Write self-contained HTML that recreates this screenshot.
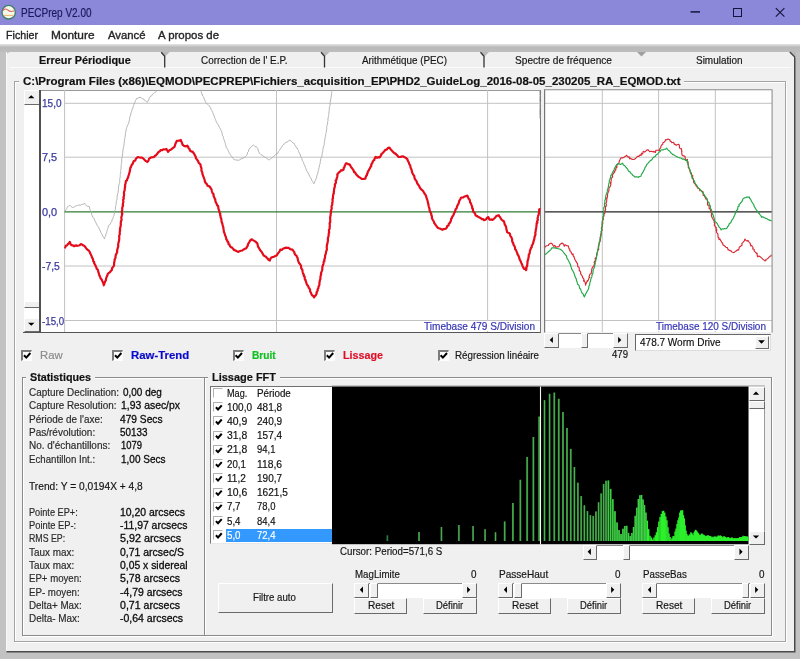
<!DOCTYPE html>
<html><head><meta charset="utf-8"><title>PECPrep V2.00</title>
<style>
html,body{margin:0;padding:0;}
body{width:800px;height:659px;position:relative;overflow:hidden;background:#c2c2c2;font-family:"Liberation Sans", sans-serif;}
.t{position:absolute;white-space:nowrap;transform-origin:0 50%;display:block;-webkit-text-stroke:0.18px currentColor;}
svg{position:absolute;left:0;top:0;}
</style></head><body><div id="w" style="position:absolute;left:0;top:0;width:800px;height:659px;will-change:transform;">
<div style="position:absolute;left:0px;top:0px;width:800px;height:24.6px;background:#8b87d9;"></div>
<svg width="20" height="25" viewBox="0 0 20 25"><ellipse cx="8.7" cy="12.2" rx="6.7" ry="6.8" fill="#f6f8ea" stroke="#3f8068" stroke-width="1.4"/><path d="M3.2 10.6 C4.5 8.6 6.2 8.6 7.6 9.8 S10.5 12.6 14.2 10.8" fill="none" stroke="#d86a60" stroke-width="1.1"/><path d="M4 15.4 H13.6" stroke="#ebb878" stroke-width="1.1"/></svg>
<span class="t" style="left:20.5px;top:7.10px;font-size:12px;line-height:12px;color:#1a1a5c;transform:scaleX(0.832);">PECPrep V2.00</span>
<svg width="800" height="25" viewBox="0 0 800 25"><g stroke="#14143c" stroke-width="1" fill="none"><path d="M690.5 11.9 H700" stroke-width="1.5"/><rect x="733.5" y="8.5" width="8" height="8"/><path d="M775.8 8.2 L784.4 16.6 M784.4 8.2 L775.8 16.6" stroke-width="1.1"/></g></svg>
<div style="position:absolute;left:0px;top:24.6px;width:800px;height:19.7px;background:#ffffff;"></div>
<span class="t" style="left:5.5px;top:29.85px;font-size:11px;line-height:11px;color:#262626;transform:scaleX(0.970);-webkit-text-stroke:0.35px #262626;">Fichier</span>
<span class="t" style="left:51px;top:29.85px;font-size:11px;line-height:11px;color:#262626;transform:scaleX(1.078);-webkit-text-stroke:0.35px #262626;">Monture</span>
<span class="t" style="left:107.5px;top:29.85px;font-size:11px;line-height:11px;color:#262626;transform:scaleX(1.028);-webkit-text-stroke:0.35px #262626;">Avancé</span>
<span class="t" style="left:157.5px;top:29.85px;font-size:11px;line-height:11px;color:#262626;transform:scaleX(1.039);-webkit-text-stroke:0.35px #262626;">A propos de</span>
<div style="position:absolute;left:0px;top:44.3px;width:800px;height:8px;background:linear-gradient(#e6e6e6,#bababa 40%,#bdbdbd);"></div>
<div style="position:absolute;left:6px;top:52px;width:788px;height:598.5px;background:#f0f0f0;border-radius:5px 3px 0 0;box-shadow:1px 1px 0 0.5px #4a4a4a;"></div>
<div style="position:absolute;left:6px;top:52px;width:1px;height:598px;background:#fafafa;"></div>
<div style="position:absolute;left:10px;top:67px;width:781px;height:1px;background:#fbfbfb;"></div>
<svg width="800" height="80"><path d="M789.5 51.5 L796 51.5 L796 58 Z" fill="#b9b9b9"/><path d="M789.8 52 L794.8 57" stroke="#444" stroke-width="1.4"/></svg>
<svg width="800" height="80"><path d="M161.2 52 L169.7 52 L165.2 56.5 Z" fill="#b8b8b8"/><path d="M161.2 52.3 L164.7 56.3 V67.5" stroke="#333" stroke-width="1.3" fill="none"/></svg>
<svg width="800" height="80"><path d="M321.0 52 L329.5 52 L325.0 56.5 Z" fill="#b8b8b8"/><path d="M321.0 52.3 L324.5 56.3 V67.5" stroke="#333" stroke-width="1.3" fill="none"/></svg>
<svg width="800" height="80"><path d="M480.5 52 L489 52 L484.5 56.5 Z" fill="#b8b8b8"/><path d="M480.5 52.3 L484 56.3 V67.5" stroke="#333" stroke-width="1.3" fill="none"/></svg>
<svg width="800" height="80"><path d="M637 52 L646 52 L641.5 56.5 Z" fill="#a0a0a0"/></svg>
<span class="t" style="left:38.75px;top:55.23px;font-size:10.5px;line-height:10.5px;color:#111;font-weight:bold;transform:scaleX(1.035);">Erreur Périodique</span>
<span class="t" style="left:201px;top:55.23px;font-size:10.5px;line-height:10.5px;color:#151515;transform:scaleX(0.943);">Correction de l&#x27; E.P.</span>
<span class="t" style="left:362px;top:55.23px;font-size:10.5px;line-height:10.5px;color:#151515;transform:scaleX(0.940);">Arithmétique (PEC)</span>
<span class="t" style="left:515px;top:55.23px;font-size:10.5px;line-height:10.5px;color:#151515;transform:scaleX(0.966);">Spectre de fréquence</span>
<span class="t" style="left:696px;top:55.23px;font-size:10.5px;line-height:10.5px;color:#151515;transform:scaleX(0.949);">Simulation</span>
<div style="position:absolute;left:13.5px;top:80.5px;width:772.5px;height:561.5px;border:1px solid #a4a4a4;box-shadow:1px 1px 0 #fff, inset 1px 1px 0 #fff;box-sizing:border-box;"></div>
<div style="position:absolute;left:19px;top:78.5px;width:665px;height:5px;background:#f0f0f0;"></div>
<span class="t" style="left:22.5px;top:76.02px;font-size:10.5px;line-height:10.5px;color:#111;font-weight:bold;transform:scaleX(1.096);">C:\Program Files (x86)\EQMOD\PECPREP\Fichiers_acquisition_EP\PHD2_GuideLog_2016-08-05_230205_RA_EQMOD.txt</span>
<div style="position:absolute;left:21.5px;top:376.5px;width:183px;height:259.3px;border:1px solid #8a8a8a;box-shadow:1px 1px 0 #fff, inset 1px 1px 0 #fff;box-sizing:border-box;"></div>
<div style="position:absolute;left:26px;top:374.5px;width:69px;height:5px;background:#f0f0f0;"></div>
<span class="t" style="left:30px;top:371.73px;font-size:10.5px;line-height:10.5px;color:#111;font-weight:bold;transform:scaleX(1.025);">Statistiques</span>
<div style="position:absolute;left:203.5px;top:376.5px;width:568.8px;height:259.3px;border:1px solid #8a8a8a;box-shadow:1px 1px 0 #fff, inset 1px 1px 0 #fff;box-sizing:border-box;"></div>
<div style="position:absolute;left:208px;top:374.5px;width:72px;height:5px;background:#f0f0f0;"></div>
<span class="t" style="left:212px;top:371.73px;font-size:10.5px;line-height:10.5px;color:#111;font-weight:bold;transform:scaleX(1.045);">Lissage FFT</span>
<div style="position:absolute;left:41px;top:90px;width:499.5px;height:242px;background:#fff;"></div>
<div style="position:absolute;left:23px;top:332px;width:518px;height:1.3px;background:#555;"></div>
<div style="position:absolute;left:539.8px;top:90px;width:1.3px;height:243px;background:#777;"></div>
<div style="position:absolute;left:41px;top:89.5px;width:499px;height:1px;background:#999;"></div>
<div style="position:absolute;left:24px;top:90px;width:15.5px;height:242px;background:#fff;border-right:1px solid #9a9a9a;box-sizing:border-box;"></div>
<div style="position:absolute;left:24px;top:90px;width:15.5px;height:14.5px;box-sizing:border-box;background:#f0f0f0;border-top:1px solid #fff;border-left:1px solid #fff;border-right:1.8px solid #6a6a6a;border-bottom:1.8px solid #6a6a6a;"></div>
<svg width="800" height="659"><path d="M28.05 98.35 L31.25 95.15 L34.45 98.35 Z" fill="#000"/></svg>
<div style="position:absolute;left:24px;top:317.5px;width:15.5px;height:14.5px;box-sizing:border-box;background:#f0f0f0;border-top:1px solid #fff;border-left:1px solid #fff;border-right:1.8px solid #6a6a6a;border-bottom:1.8px solid #6a6a6a;"></div>
<svg width="800" height="659"><path d="M28.05 322.65 L31.25 325.85 L34.45 322.65 Z" fill="#000"/></svg>
<div style="position:absolute;left:24px;top:300.5px;width:15.5px;height:7px;box-sizing:border-box;background:#f0f0f0;border-top:1px solid #fff;border-left:1px solid #fff;border-right:1.8px solid #6a6a6a;border-bottom:1.8px solid #6a6a6a;"></div>
<div style="position:absolute;left:39.4px;top:90px;width:1.4px;height:243px;background:#505050;"></div>
<svg width="800" height="659" viewBox="0 0 800 659">
<path d="M64.5 103.3 H540" stroke="#c2c2c2" stroke-width="1"/>
<path d="M64.5 157.2 H540" stroke="#c2c2c2" stroke-width="1"/>
<path d="M64.5 266 H540" stroke="#c2c2c2" stroke-width="1"/>
<path d="M64.5 320.5 H540" stroke="#c2c2c2" stroke-width="1"/>
<path d="M64.6 90 V332" stroke="#c2c2c2" stroke-width="1"/>
<path d="M276.5 90 V332" stroke="#c2c2c2" stroke-width="1"/>
<path d="M487.6 90 V332" stroke="#c2c2c2" stroke-width="1"/>
<path d="M64.5 211.9 H540" stroke="#2e7d32" stroke-width="1.3"/>
<polyline points="65.4,210.7 66.2,209.5 66.7,208.6 67.0,207.5 68.4,206.4 69.7,205.1 71.2,206.7 72.3,207.3 73.7,207.4 74.9,206.5 76.2,205.7 77.6,205.5 78.8,205.0 80.3,205.2 81.7,204.5 83.4,204.0 84.8,203.3 85.4,204.6 86.6,206.0 87.7,206.4 89.1,206.4 89.7,208.1 89.9,209.3 90.4,210.9 91.0,211.7 91.5,212.9 91.7,214.7 92.2,215.7 92.7,217.0 93.6,218.1 94.3,219.0 94.8,220.4 95.3,221.5 96.1,223.1 96.6,224.1 97.1,225.3 98.1,226.8 98.9,227.4 99.3,228.9 99.7,229.9 100.3,230.8 100.9,232.5 101.5,233.2 102.2,234.9 102.7,235.9 103.7,237.6 104.5,238.9 104.7,237.4 105.2,236.7 105.9,234.9 106.0,233.8 106.5,232.9 106.9,231.5 107.0,230.5 107.4,229.5 108.0,228.4 108.1,227.2 108.5,225.5 109.5,225.0 110.3,223.9 111.0,222.5 111.7,221.6 112.1,219.9 112.7,218.8 113.2,217.5 113.5,216.3 114.0,215.3 114.1,214.5 114.6,212.7 114.7,211.7 115.0,210.3 115.4,209.8 115.4,208.1 115.5,206.6 115.8,205.6 116.2,204.3 116.0,203.7 116.4,201.8 116.6,200.5 116.8,200.0 117.1,198.6 117.0,197.1 117.1,196.2 117.5,194.9 117.6,193.3 118.0,192.7 118.2,191.3 118.4,190.0 118.3,188.6 118.6,187.0 118.6,186.0 118.9,185.1 119.4,183.6 119.6,182.8 119.8,181.1 119.7,179.8 119.8,178.6 120.1,177.9 120.3,176.4 120.3,175.5 120.2,174.2 120.7,173.1 120.7,171.6 120.6,170.7 120.8,169.5 121.2,168.0 121.0,167.2 121.3,165.4 121.1,164.2 121.6,163.5 121.4,162.3 121.9,161.0 121.7,159.7 121.7,158.1 122.3,157.4 122.3,156.3 122.4,155.0 122.8,153.3 122.7,152.1 122.9,151.1 123.1,149.7 123.2,148.8 123.5,147.2 123.8,146.3 123.9,145.1 124.1,143.5 124.3,141.9 124.5,140.7 124.4,140.0 124.7,138.5 125.1,137.4 125.1,136.1 125.4,135.1 125.4,133.7 125.6,132.2 126.0,131.2 126.1,130.2 126.4,128.7 126.7,127.6 127.1,126.6 127.6,125.3 128.0,124.4 128.6,123.2 129.1,121.6 129.2,120.9 129.6,119.1 129.6,118.2 129.9,116.9 130.1,116.1 130.8,115.1 130.8,113.8 131.3,112.1 131.7,111.6 131.8,110.4 132.3,108.9 133.0,108.0 133.1,106.5 133.7,105.3 134.0,104.1 134.7,102.6 135.2,101.7 135.5,100.4 136.3,99.3 136.5,98.5 138.1,98.2 138.9,97.3 140.0,97.5 141.2,97.6 142.4,98.9 143.7,99.0 144.4,100.2 145.5,100.9 146.2,101.3 147.3,102.4 147.7,101.5 148.6,100.1 149.0,98.8 149.7,97.5 150.7,96.2 151.7,95.8 152.4,94.3 153.7,93.5 154.6,92.6 155.8,91.8 156.8,91.0 157.8,90.2" fill="none" stroke="#adadad" stroke-width="0.9" stroke-linejoin="round" stroke-linecap="round"/>
<polyline points="200.7,90.1 201.0,91.2 201.4,92.2 201.8,93.4 202.5,95.0 202.7,96.1 203.5,96.9 204.1,98.5 204.6,100.1 205.2,101.2 206.0,102.9 206.7,103.6 207.7,104.4 208.5,105.0 209.2,105.7 210.0,107.1 210.6,107.8 211.1,109.4 211.9,110.4 212.1,111.2 212.7,112.5 213.1,113.6 213.6,115.1 214.4,116.0 214.5,117.5 215.0,118.1 215.3,119.3 215.9,120.6 216.3,121.8 216.8,122.7 217.4,123.9 218.0,124.7 218.8,126.0 219.5,127.4 220.2,128.6 220.9,129.9 221.1,130.8 221.9,132.0 222.2,133.7 222.3,135.1 223.1,136.3 223.5,137.7 223.6,138.7 224.2,140.1 224.7,141.3 224.9,142.6 225.4,143.6 225.5,144.2 225.8,145.7 226.2,147.3 226.9,148.2 227.5,149.3 227.9,149.9 228.6,151.5 229.0,152.5 229.6,153.2 230.1,154.4 230.6,155.4 231.8,156.3 232.6,157.9 233.3,158.4 234.1,159.6 235.6,160.0 236.9,159.9 238.0,160.4 239.7,159.8 241.0,158.9 242.1,158.5 243.4,158.2 244.4,157.1 245.4,156.6 246.4,155.6 247.0,154.5 247.5,154.0 247.5,152.5 248.4,151.7 248.6,150.0 249.0,149.5 250.0,148.1 251.0,147.1 252.4,145.7 253.4,145.0 254.4,145.8 255.1,146.7 256.3,146.6 257.1,147.7 257.8,148.8 258.2,150.1 258.8,151.8 259.2,152.9 260.2,153.7 261.2,154.8 262.2,155.2 263.0,155.9 264.3,156.8 265.1,157.3 266.2,157.7 267.2,158.9 268.4,159.7 269.5,159.8 270.6,158.7 271.6,158.3 272.9,157.2 273.8,156.2 274.9,155.3 275.9,154.2 276.9,153.8 277.9,153.3 278.4,151.7 279.4,150.6 279.8,149.7 280.4,148.9 281.4,147.3 282.0,146.2 283.0,145.3 283.8,144.1 284.8,143.6 286.0,142.1 287.5,142.1 288.6,140.7 289.9,140.1 290.9,140.9 291.9,141.8 293.1,143.1 294.2,143.5 294.7,144.8 295.4,145.8 295.9,146.9 297.1,147.9 297.5,149.5 298.4,150.3 298.6,151.5 299.2,152.8 300.0,154.3 300.4,154.9 300.5,156.6 301.5,157.6 301.8,158.4 302.2,160.3 303.0,161.5 303.6,162.2 303.6,163.3 304.4,164.9 305.1,166.2 305.4,167.4 305.9,168.4 306.2,169.8 306.9,171.1 307.6,171.8 308.0,172.9 308.8,174.4 309.1,175.1 309.9,176.7 310.4,177.6 311.2,178.6 311.7,180.2 312.7,181.6 313.3,182.7 313.7,183.8 314.6,182.9 314.8,181.1 315.4,180.4 315.9,178.8 316.6,178.1 316.7,176.2 317.0,175.3 317.5,173.9 317.9,173.1 318.0,171.5 318.6,170.3 318.8,169.0 318.8,168.2 319.2,167.2 319.5,165.3 319.7,164.3 320.2,163.5 320.2,161.8 320.5,161.1 320.7,159.1 321.0,158.2 321.6,157.3 321.8,156.2 322.2,154.5 322.1,153.7 322.6,151.8 322.8,150.8 322.9,149.6 323.1,148.1 323.4,147.1 323.9,145.7 324.2,144.6 324.1,143.9 324.6,142.3 324.4,141.1 324.8,140.2 324.9,138.5 325.4,137.0 325.4,136.4 325.8,134.6 325.6,133.4 326.3,132.3 326.4,131.6 326.4,129.8 326.9,128.9 326.7,127.8 326.9,126.2 326.9,125.4 327.5,124.1 327.7,122.4 327.5,121.6 328.1,120.8 327.9,119.0 328.1,118.0 328.5,116.5 328.6,115.8 328.8,114.6 328.9,113.1 328.9,111.9 329.3,110.5 329.2,109.8 329.4,108.0 329.4,107.2 329.7,106.3 330.2,105.1 330.1,103.2 330.1,102.3 330.6,101.1 330.5,99.9 330.9,98.8 331.1,97.8 331.2,96.0 331.5,94.9 331.5,93.8 331.8,92.4 331.7,91.3 332.0,90.2" fill="none" stroke="#adadad" stroke-width="0.9" stroke-linejoin="round" stroke-linecap="round"/>
<polyline points="539.4,90.3 539.6,91.1 539.6,92.8 539.6,93.4 539.8,95.0 539.9,95.8 539.6,97.6 539.8,98.9 539.4,99.6 539.5,100.7 539.9,102.2 539.9,103.3 539.9,104.6 539.6,106.0 539.9,106.7 539.8,108.4 539.6,109.4 539.6,110.5 539.6,112.0 539.8,112.9 539.5,114.2 539.9,115.3 539.7,116.5 539.8,118.0" fill="none" stroke="#adadad" stroke-width="0.9" stroke-linejoin="round" stroke-linecap="round"/>
<polyline points="65.2,247.5 65.8,245.8 67.2,245.2 68.2,243.7 68.8,243.4 69.8,242.0 70.6,244.1 71.5,245.2 72.7,245.3 74.2,246.2 75.0,245.7 76.4,245.4 77.1,245.8 78.5,245.5 79.7,245.2 80.9,244.2 81.8,244.3 83.5,245.6 84.5,246.1 85.5,247.3 86.3,248.4 87.8,250.0 88.8,250.4 89.7,252.1 89.8,252.3 90.7,254.4 90.9,254.6 91.6,256.1 92.0,257.5 92.5,258.2 93.0,259.5 93.3,261.4 94.1,261.9 94.2,263.4 95.1,264.7 95.5,265.8 96.5,267.9 96.7,268.8 97.6,269.4 98.1,270.7 98.4,272.3 98.8,273.2 99.1,274.7 99.6,275.9 100.2,277.0 100.6,278.5 101.6,279.4 102.4,281.3 102.8,282.1 103.4,283.5 103.8,285.3 104.2,284.0 104.9,282.2 105.4,281.0 105.9,280.4 106.1,278.3 106.5,277.4 107.1,275.8 107.4,275.5 107.7,274.0 108.5,273.2 109.8,272.3 111.3,270.5 111.8,270.1 112.0,268.3 113.1,266.9 113.9,265.9 114.1,264.5 114.1,264.1 114.2,262.1 114.6,260.9 114.6,259.5 114.9,259.1 115.5,257.8 115.5,256.5 115.8,255.0 116.5,253.6 117.0,252.5 117.2,251.7 117.1,250.5 117.6,248.5 118.0,247.1 118.3,246.1 118.1,245.0 118.4,243.0 118.8,241.6 119.1,240.5 119.1,240.1 119.3,238.5 119.2,236.5 119.2,235.5 119.7,234.6 119.8,233.8 119.7,231.9 120.2,230.4 119.9,229.6 120.1,228.3 120.3,227.4 120.7,225.7 120.9,224.8 120.7,224.1 120.9,222.0 120.9,221.3 121.6,220.2 121.4,218.4 121.3,217.6 121.7,216.0 121.9,214.9 122.3,214.0 121.9,212.9 121.9,211.2 122.3,209.6 122.2,208.9 122.3,207.4 123.1,205.6 122.7,204.9 123.0,203.6 123.4,201.8 123.2,200.7 123.1,200.0 123.8,198.5 123.4,197.4 124.0,195.8 124.1,194.5 123.9,192.9 124.1,191.7 124.3,191.2 124.7,190.1 124.8,188.3 124.9,187.3 125.2,186.2 125.0,185.1 125.6,183.4 125.7,182.0 125.9,180.9 126.9,180.4 127.5,178.4 128.3,177.1 128.2,176.5 128.7,175.1 129.1,174.2 129.3,172.8 129.8,171.6 129.9,170.3 130.3,168.6 130.4,167.7 131.0,166.8 131.8,164.6 132.4,164.4 133.3,162.3 133.8,161.0 134.9,160.7 135.6,159.8 135.9,158.7 136.8,157.9 137.8,157.0 139.1,157.3 141.4,157.6 142.0,157.7 143.2,158.4 144.8,160.1 145.7,161.0 146.7,161.3 147.3,162.0 148.3,161.0 148.6,160.1 149.0,158.8 149.8,158.2 151.3,157.3 153.1,157.1 154.5,156.7 154.9,155.7 156.0,155.2 156.8,154.3 157.8,152.9 158.8,151.9 160.0,151.1 160.6,150.2 162.3,150.1 163.2,149.4 165.0,149.5 166.3,148.9 167.3,150.5 168.1,151.9 169.3,150.3 170.8,149.7 171.5,149.1 172.8,148.1 174.5,146.9 175.0,145.1 175.4,143.9 176.2,142.2 176.8,140.9 178.6,140.6 180.1,140.3 180.8,140.0 181.1,140.9 181.8,142.5 182.3,143.7 182.5,144.7 184.0,145.9 185.9,146.4 187.3,145.7 188.3,147.1 188.6,148.2 189.7,149.2 189.9,150.5 191.6,151.7 192.6,151.5 193.3,152.8 194.1,153.7 194.6,154.9 195.7,156.6 195.8,158.1 196.4,158.8 197.7,160.5 198.2,161.4 198.7,162.8 199.5,163.5 200.5,164.5 200.8,166.6 201.2,167.5 201.5,168.7 201.4,170.1 201.8,171.6 202.4,172.5 202.4,174.1 202.8,174.8 203.4,176.8 203.9,177.9 204.4,179.2 204.7,180.2 204.9,181.7 205.4,182.5 206.5,183.9 207.0,184.4 207.5,185.7 209.0,186.2 210.4,187.4 210.6,188.3 211.5,189.2 211.9,191.1 212.1,191.8 212.7,193.3 213.6,194.3 213.5,195.7 214.2,197.2 214.6,198.4 215.3,199.6 215.4,201.4 216.0,202.5 216.7,203.9 217.2,205.5 218.0,205.8 218.3,207.4 218.4,208.6 219.0,210.2 219.3,210.9 219.5,212.6 220.3,213.6 220.1,215.1 220.5,215.7 220.6,217.5 221.3,218.6 221.4,219.7 221.5,221.4 221.8,222.3 222.4,223.7 222.4,224.3 222.7,225.4 223.2,226.9 223.4,228.0 223.5,229.2 223.8,230.3 223.9,232.1 224.4,232.7 224.8,234.2 225.2,235.6 225.7,236.5 226.2,238.2 226.2,239.3 227.3,240.5 227.4,241.7 228.3,242.0 228.5,244.2 229.5,244.6 229.7,245.6 230.8,247.2 231.9,247.4 233.3,248.9 233.9,249.9 235.5,250.5 236.9,251.3 238.4,251.9 239.4,251.2 241.0,250.8 242.3,250.5 243.7,249.4 244.9,248.8 246.4,248.2 246.8,247.2 247.3,246.4 247.8,245.7 247.9,244.5 248.6,243.1 249.2,242.3 249.9,240.9 251.2,239.6 251.9,239.3 252.9,240.1 254.7,241.1 255.8,241.9 256.5,242.6 257.3,243.3 257.7,245.1 258.0,246.6 258.6,247.4 259.4,248.8 259.9,249.6 260.7,250.9 261.6,251.7 262.3,253.0 262.8,253.9 263.8,255.6 265.0,256.3 265.8,256.6 266.8,257.8 267.9,258.9 268.4,259.8 269.9,260.5 270.2,259.1 271.1,257.8 272.6,257.0 273.8,256.8 275.3,256.1 276.5,255.6 277.3,254.5 278.2,253.0 279.0,252.2 279.9,250.7 280.3,249.6 282.0,249.8 283.3,248.5 284.8,248.2 286.0,247.6 287.2,247.8 288.6,247.8 290.2,249.1 291.1,249.4 292.5,249.7 293.7,251.3 294.4,252.3 294.5,253.4 295.6,255.1 296.5,255.7 296.8,256.5 297.5,257.8 297.7,258.8 298.1,260.7 298.7,262.2 299.2,263.3 299.7,263.6 300.6,265.0 301.2,266.2 301.1,268.0 301.9,269.2 302.3,269.6 302.6,271.4 302.9,272.8 303.2,274.0 303.8,274.2 303.8,276.0 304.7,276.6 304.7,278.4 305.0,279.7 305.6,280.0 305.9,281.7 306.4,283.0 306.8,284.3 307.5,285.3 308.3,286.2 308.7,287.7 309.7,288.9 310.0,289.5 310.2,291.6 311.1,292.8 311.3,293.9 312.2,295.5 313.1,295.8 314.1,297.4 314.8,296.1 315.8,295.3 316.7,293.5 316.5,292.3 317.1,291.5 317.7,290.6 317.6,289.3 318.4,288.2 318.6,286.3 319.1,285.7 319.4,284.7 319.4,282.5 319.7,282.1 319.7,280.8 320.4,279.0 320.4,278.2 320.5,276.5 320.6,275.9 321.2,274.3 320.9,273.5 321.6,271.6 321.8,271.1 322.3,269.5 322.3,268.4 322.4,266.7 322.7,266.1 323.2,264.7 323.5,263.4 323.7,261.7 324.5,260.9 324.2,259.9 324.9,258.1 325.0,257.1 325.2,255.5 325.1,255.4 325.9,253.6 326.0,252.1 326.3,251.0 326.7,250.2 326.9,249.1 326.7,246.9 326.9,245.8 327.0,244.4 327.4,244.0 327.5,242.8 328.0,240.6 328.0,239.7 327.8,239.1 328.1,237.4 328.5,236.5 328.7,234.7 328.7,233.1 329.2,232.8 328.9,230.5 329.1,229.6 329.6,228.9 329.7,226.7 329.8,226.1 329.8,225.2 329.6,223.0 330.2,222.6 330.2,220.6 330.3,219.8 330.1,218.1 330.3,216.6 330.6,215.4 330.6,214.1 331.0,212.6 331.1,211.6 330.9,211.1 331.2,209.9 331.8,208.6 331.5,206.9 331.6,206.1 332.3,204.6 332.2,203.0 332.6,201.9 332.6,200.3 332.5,199.0 333.0,198.3 332.9,197.4 333.1,195.6 333.3,194.2 333.9,193.1 333.7,192.0 334.0,191.2 334.0,190.1 334.2,188.7 334.8,186.8 334.9,185.6 334.9,184.3 335.3,183.9 336.0,182.6 335.7,180.7 336.6,179.3 336.7,178.3 337.2,176.8 337.4,175.9 337.3,174.4 338.0,173.7 338.7,172.6 340.3,171.3 341.1,170.2 342.1,170.5 343.6,169.5 343.7,168.0 344.5,167.2 344.7,165.6 345.3,164.8 345.9,163.4 346.8,163.4 348.4,164.3 349.6,164.4 350.5,165.9 351.3,167.6 351.8,167.8 352.9,169.5 353.6,170.4 354.1,172.1 355.0,172.4 355.9,173.9 356.5,174.8 357.7,175.9 358.5,176.8 360.0,177.6 360.7,178.1 361.7,178.9 363.2,179.0 365.4,178.6 365.6,177.5 366.2,175.9 367.0,175.0 366.9,173.8 367.5,173.4 367.9,171.6 368.8,170.6 369.0,169.7 369.9,168.4 370.6,166.7 371.3,166.1 371.3,164.2 372.2,163.3 372.7,161.7 373.5,160.5 374.2,160.1 374.6,158.6 375.7,156.9 377.1,157.8 378.2,157.2 379.8,157.3 380.2,156.7 381.2,154.9 381.5,153.8 382.4,153.4 383.3,152.3 384.4,151.3 385.0,150.0 386.7,149.6 387.6,148.3 389.2,147.6 389.9,148.1 390.7,149.5 391.3,150.0 392.7,151.6 393.6,152.3 394.4,153.4 395.4,153.3 396.1,154.3 397.3,155.3 398.4,156.9 399.6,157.0 400.8,156.9 402.3,156.3 403.2,156.4 404.2,157.1 406.0,157.9 406.7,158.7 407.5,159.4 407.7,160.5 408.4,161.8 408.9,162.7 409.3,164.2 410.2,165.4 410.4,166.6 410.6,167.8 411.1,168.8 411.6,169.9 411.8,170.8 412.1,172.3 412.7,173.6 413.0,174.5 414.1,175.5 414.4,177.0 414.7,178.7 415.3,179.6 415.7,180.0 416.8,181.6 416.9,182.6 417.8,184.2 418.2,184.7 419.4,186.4 419.5,187.1 420.5,188.5 421.5,189.7 422.5,190.4 423.4,191.7 424.0,192.5 424.6,193.9 425.3,194.4 425.8,195.4 426.4,197.2 426.8,198.7 427.1,199.3 427.6,201.0 427.8,201.7 428.0,203.0 428.4,204.0 428.5,205.5 428.8,206.5 429.4,208.3 429.5,209.0 429.6,210.1 430.0,211.6 430.6,212.2 431.2,213.7 431.4,215.5 431.9,216.0 431.9,218.0 431.9,218.2 432.9,220.0 433.8,221.5 434.2,223.0 434.9,223.8 435.6,224.9 436.5,226.2 437.6,227.7 438.9,228.3 439.7,228.5 441.1,229.1 442.3,229.8 443.8,229.1 444.7,229.0 446.2,228.4 446.7,227.8 447.2,226.1 448.5,225.5 448.9,223.6 449.8,223.0 450.3,222.1 451.0,220.3 451.1,219.0 451.9,218.0 452.3,216.5 453.1,215.7 453.5,214.9 454.3,212.7 454.7,212.3 455.2,211.0 455.5,209.4 456.5,208.5 456.9,206.9 457.3,206.1 457.7,204.9 458.4,204.0 459.0,202.2 459.3,200.6 460.4,199.3 460.8,198.0 461.8,197.5 463.3,197.4 464.4,196.5 466.1,196.2 467.3,195.6 467.9,196.8 468.7,198.8 469.5,199.4 469.9,200.6 470.1,202.3 471.0,203.5 471.2,204.3 471.4,204.8 472.2,206.9 472.1,208.1 472.8,208.6 473.0,210.5 473.3,211.7 473.9,212.3 475.0,213.4 475.6,215.4 476.7,216.1 477.5,216.2 478.5,217.1 480.0,217.8 480.8,218.2 481.9,219.1 483.0,219.0 484.1,220.2 485.4,219.8 486.2,218.9 487.2,217.7 488.4,217.1 489.0,218.9 489.8,219.8 491.5,219.4 492.5,219.9 493.9,218.8 494.5,218.2 495.5,217.2 496.3,216.0 498.7,215.2 499.4,216.3 500.4,217.7 501.3,219.3 501.8,219.8 502.9,220.7 504.0,221.5 504.4,223.1 504.8,224.6 505.5,225.7 506.0,226.6 506.2,227.6 506.5,229.7 506.9,230.8 507.1,232.0 508.2,232.7 509.1,233.0 510.0,234.0 510.3,235.8 510.9,236.6 511.8,238.3 512.2,239.6 512.1,240.2 512.4,242.0 513.2,242.9 513.4,244.5 513.9,245.3 514.6,246.5 515.0,247.4 515.2,249.3 516.1,250.2 516.2,250.5 516.7,251.9 517.3,253.3 517.5,254.4 518.4,255.5 519.0,257.2 519.3,258.0 519.7,259.8 520.2,260.3 521.1,262.4 521.3,262.9 522.2,264.8 522.4,265.6 523.2,267.4 524.0,268.8 525.2,268.8 526.1,270.1 526.4,269.3 526.3,267.3 527.0,266.5 527.2,265.5 527.3,264.5 527.5,262.8 527.4,261.8 527.9,260.2 528.4,258.4 528.6,256.9 528.8,256.4 528.7,254.8 529.6,253.6 529.8,251.9 529.9,250.7 530.6,249.3 531.0,247.9 531.7,247.3 531.8,245.6 532.5,244.6 533.2,243.3 533.2,242.6 533.6,241.1 534.0,240.0 534.4,238.6 534.5,237.1 535.1,235.5 535.5,234.5 535.3,232.6 535.7,231.2 535.7,230.0 536.0,229.1 536.3,227.2 536.4,226.3 536.6,224.6 536.6,223.2 537.4,222.7 537.1,221.3 537.9,219.9 537.5,218.5 537.9,216.9 538.2,215.4 538.7,214.8 538.8,213.7 539.1,211.6 539.1,210.1 539.6,209.1" fill="none" stroke="#e40c1a" stroke-width="2.2" stroke-linejoin="round" stroke-linecap="round"/>
<rect x="545" y="90" width="227.5" height="242" fill="#fff"/>
<path d="M545 103.3 H772" stroke="#c2c2c2" stroke-width="1"/>
<path d="M545 157.2 H772" stroke="#c2c2c2" stroke-width="1"/>
<path d="M545 266 H772" stroke="#c2c2c2" stroke-width="1"/>
<path d="M545 320.5 H772" stroke="#c2c2c2" stroke-width="1"/>
<path d="M602.3 90 V332" stroke="#c2c2c2" stroke-width="1"/>
<path d="M658.6 90 V332" stroke="#c2c2c2" stroke-width="1"/>
<path d="M715.3 90 V332" stroke="#c2c2c2" stroke-width="1"/>
<path d="M545 211.9 H772" stroke="#222" stroke-width="1.2"/>
<polyline points="544.4,247.6 546.4,245.8 546.6,245.7 548.5,245.5 548.6,244.4 550.4,243.5 550.8,243.0 552.4,243.9 552.8,245.1 553.8,246.4 554.7,245.3 556.1,247.3 557.6,246.9 558.9,246.8 559.6,245.2 560.3,244.2 562.1,243.1 563.4,243.9 564.3,246.2 565.1,244.8 566.7,245.7 568.3,245.9 569.1,248.9 569.7,249.1 569.7,250.7 570.7,251.3 571.1,252.4 572.2,254.4 573.2,254.0 573.1,255.8 574.1,256.7 574.1,257.3 574.8,259.2 576.1,261.4 576.5,262.7 577.1,263.1 577.4,263.0 577.7,265.4 577.7,266.5 579.1,267.5 579.2,268.2 579.3,270.7 579.4,270.3 580.7,272.1 580.5,273.7 581.3,274.7 581.9,275.7 582.6,276.6 582.5,277.3 584.0,279.3 583.5,281.1 584.2,280.6 585.0,282.1 585.5,284.0 585.6,285.2 585.9,283.9 587.0,281.8 587.3,280.6 587.7,281.2 588.4,279.8 589.1,277.3 589.8,277.5 589.1,276.6 590.0,274.0 591.2,273.7 591.4,271.6 591.9,270.3 591.6,269.9 591.8,269.2 592.4,267.4 593.4,266.5 594.0,265.7 594.3,264.4 594.7,263.9 594.1,262.5 594.7,261.3 595.5,260.3 595.1,258.1 596.2,258.2 596.6,255.1 596.8,254.0 597.1,254.4 596.8,253.5 597.9,250.8 597.6,250.1 598.8,249.2 598.1,246.7 598.3,247.2 598.6,245.5 598.9,244.6 599.3,242.2 600.1,241.8 600.1,241.2 600.6,238.3 600.0,237.3 600.5,237.7 601.1,234.7 600.4,235.2 601.3,233.0 601.2,231.3 601.9,230.6 602.2,229.9 601.3,228.1 601.7,228.1 602.4,225.0 602.1,224.5 602.7,223.8 602.8,222.1 602.4,221.4 603.1,218.9 603.4,219.8 603.1,216.8 604.1,215.9 603.8,215.2 604.0,214.1 604.5,213.8 605.3,210.5 605.0,210.9 605.6,209.7 605.5,208.2 605.3,206.2 606.1,206.3 606.5,204.7 605.8,203.7 606.6,201.9 606.7,200.4 606.8,199.3 606.5,198.0 607.1,198.3 607.6,195.7 607.5,194.3 607.9,192.9 607.8,193.3 608.6,191.2 609.1,189.7 608.8,188.1 609.2,187.4 610.1,186.8 610.6,185.2 610.9,184.5 610.1,182.5 611.0,183.1 611.0,181.4 611.3,180.5 611.1,178.5 612.7,176.8 612.3,175.1 612.7,174.4 613.9,173.1 614.0,171.8 614.7,172.1 615.3,169.4 615.8,169.9 616.2,166.8 616.9,167.3 616.9,164.5 617.3,164.3 618.8,163.3 619.4,161.2 619.2,161.3 620.2,159.3 620.8,158.0 621.2,157.8 622.4,157.9 624.0,157.2 625.5,156.3 626.6,155.3 628.2,157.2 629.2,156.8 629.8,158.9 630.4,158.2 631.1,158.9 633.0,159.5 634.0,159.5 634.7,159.1 635.7,158.5 636.8,157.0 638.0,156.1 639.0,156.5 640.1,154.7 641.1,155.5 641.6,153.2 642.7,154.0 643.2,151.3 644.7,152.1 646.1,150.8 647.3,149.8 648.2,149.9 648.5,150.4 649.7,151.6 651.6,151.3 653.3,152.1 653.5,151.3 655.5,152.5 655.9,150.2 657.9,150.2 659.4,150.4 659.6,148.9 660.5,148.1 660.6,147.9 660.9,146.4 661.6,145.1 662.7,144.5 662.9,142.7 664.0,142.3 665.4,140.6 665.6,139.6 666.9,139.8 668.0,139.0 669.9,139.8 670.2,141.4 671.0,141.3 671.8,142.7 673.6,142.3 674.3,144.3 674.6,144.0 676.2,145.3 677.1,144.8 679.0,144.3 679.5,146.5 679.5,147.7 680.2,148.8 681.4,148.7 681.9,151.7 681.6,150.9 681.9,154.2 682.3,155.3 683.1,155.9 683.7,155.7 685.1,156.5 685.4,159.3 686.5,160.2 687.5,159.4 687.0,162.3 688.0,161.8 688.1,163.4 688.4,164.4 688.3,167.5 689.1,168.5 689.3,168.8 689.7,169.9 690.2,171.7 690.5,173.0 691.4,172.9 691.6,174.9 692.8,175.8 692.2,178.4 693.5,179.1 693.1,179.0 693.5,180.0 693.6,182.2 694.5,183.5 694.8,183.5 696.1,185.8 696.8,186.4 697.8,188.2 698.9,188.5 699.2,188.5 700.0,190.8 700.9,190.3 701.5,190.9 703.0,191.8 703.1,194.9 703.3,195.3 704.2,195.6 704.6,196.5 706.1,199.1 706.9,198.6 707.3,200.3 707.6,202.0 707.6,204.2 707.5,204.9 709.1,205.5 709.1,207.8 709.0,208.2 710.1,208.9 710.5,210.1 710.6,211.8 711.2,212.4 711.6,214.1 711.4,215.4 711.9,217.3 712.6,218.1 713.0,218.7 713.0,219.2 714.3,221.2 714.1,222.4 714.8,223.0 714.3,225.4 715.1,226.2 715.9,227.9 716.3,227.3 716.0,230.2 716.9,229.8 716.4,231.3 716.7,232.7 718.0,234.2 717.9,234.4 718.2,237.6 718.9,237.6 719.0,239.6 720.1,239.1 720.7,240.6 721.3,241.4 721.8,242.6 722.6,242.9 723.1,245.1 723.7,245.3 725.3,246.5 725.8,247.2 727.4,247.6 728.2,250.0 728.6,249.8 730.4,251.0 730.8,250.5 731.9,252.0 733.3,252.5 733.9,252.7 735.4,251.3 735.8,251.2 737.6,249.7 738.6,250.1 738.8,249.4 739.4,246.9 740.7,246.5 741.0,245.7 742.2,245.1 741.7,243.6 743.0,242.3 744.1,241.0 744.3,241.0 744.9,239.0 746.0,240.5 747.2,241.1 747.9,240.4 749.2,242.3 750.4,243.6 750.2,243.5 750.8,245.9 751.5,245.4 753.0,247.5 752.7,248.9 754.3,249.5 754.1,251.1 755.2,251.9 756.6,253.5 757.1,253.1 757.1,255.0 757.7,256.8 759.0,256.0 760.1,256.7 761.8,258.1 762.4,258.6 762.8,259.1 764.9,260.9 765.9,260.5 765.9,259.2 767.2,259.0 767.9,258.4 768.9,257.3 770.1,256.1 771.1,256.0 771.4,255.0" fill="none" stroke="#dc2834" stroke-width="1.15" stroke-linejoin="round" stroke-linecap="round"/>
<polyline points="544.7,254.8 545.9,254.0 546.8,253.1 547.5,252.7 548.4,251.7 549.6,250.7 550.2,250.2 551.1,249.3 551.7,247.9 553.4,247.7 554.9,247.9 556.1,248.2 557.6,248.7 558.8,248.8 560.1,249.2 560.7,249.6 561.9,250.4 562.8,251.3 563.2,252.0 564.5,253.7 565.1,254.3 565.9,255.4 566.6,255.8 566.7,257.5 567.2,258.8 567.9,259.4 568.5,260.7 569.0,261.7 569.7,263.0 570.2,264.0 570.7,266.0 570.9,266.2 571.4,268.0 571.8,269.0 572.2,270.1 573.0,271.2 573.5,272.0 574.0,273.2 574.5,275.2 575.0,275.9 575.0,276.8 575.8,278.1 576.3,278.9 576.5,280.8 577.0,281.6 577.2,282.4 577.7,284.3 578.5,284.7 579.1,285.6 579.5,287.6 579.9,288.7 580.6,288.9 581.0,290.4 581.5,291.8 582.0,292.9 582.6,293.3 583.3,294.4 583.9,296.2 584.5,297.0 584.7,295.9 585.3,294.9 585.9,293.6 586.6,292.3 587.4,290.9 587.6,290.6 588.3,289.3 588.9,287.8 588.8,286.3 589.6,285.1 589.7,284.4 589.7,283.2 590.1,282.1 590.6,280.8 590.7,279.6 591.1,278.2 591.4,277.8 591.9,276.7 591.9,275.5 592.5,274.2 592.9,273.0 593.0,271.9 593.2,270.2 593.5,269.2 594.1,267.9 594.6,266.6 594.7,265.5 594.9,264.9 595.3,263.0 595.2,262.3 595.9,260.5 595.9,260.0 596.3,258.4 596.5,257.4 596.8,255.7 597.1,254.9 597.0,253.4 597.2,252.8 597.7,251.1 597.7,249.8 597.9,248.7 598.2,248.3 598.8,246.9 598.8,245.4 599.2,244.6 599.4,243.1 599.3,241.9 600.0,240.9 599.8,239.6 600.2,237.9 600.8,237.2 600.8,235.4 601.0,235.0 601.2,233.6 601.3,232.5 601.3,230.9 601.6,230.0 601.8,228.3 602.0,227.4 602.1,225.7 602.3,225.2 602.0,224.0 602.1,222.2 602.4,221.0 602.6,220.5 602.9,219.1 602.8,217.9 603.2,216.6 603.5,215.5 603.3,213.6 603.6,213.1 603.6,211.7 604.0,210.7 603.7,209.2 603.8,207.6 604.4,206.7 604.5,205.5 604.5,204.0 604.6,203.5 604.9,201.7 604.8,200.5 605.4,199.4 605.6,198.6 605.6,197.3 605.8,196.2 606.2,194.4 606.9,193.3 606.8,192.6 607.3,191.4 607.4,189.8 608.0,188.6 608.3,187.1 608.5,185.8 608.6,184.5 608.7,184.2 609.1,182.9 609.3,181.2 609.4,180.2 610.2,178.9 610.2,178.1 610.7,176.7 610.8,175.5 611.6,174.8 612.1,173.4 612.8,172.0 613.2,171.2 614.0,170.0 614.2,169.3 614.6,168.1 615.5,166.7 615.9,165.8 616.7,164.7 617.9,163.9 618.8,163.8 620.4,164.4 621.2,163.9 622.6,163.2 623.4,164.9 624.4,165.4 625.3,166.4 626.1,167.5 627.2,168.7 627.9,169.7 628.5,171.0 629.6,171.7 630.2,172.1 631.2,173.7 632.2,174.2 632.7,175.4 634.0,176.0 634.7,177.0 635.7,176.7 636.9,176.9 638.5,177.3 639.3,176.5 641.0,176.2 641.1,175.3 641.6,174.1 642.3,173.1 643.2,171.9 643.2,171.5 643.9,170.3 644.6,169.1 645.0,167.4 645.8,166.7 646.2,165.8 646.9,164.3 647.5,164.0 648.5,162.5 649.5,161.6 650.5,160.4 651.4,160.1 652.0,159.5 652.9,157.9 653.6,157.3 655.0,156.6 655.6,155.9 656.3,154.5 657.5,154.3 658.3,153.2 659.3,152.0 660.2,151.5 660.7,150.3 662.2,149.8 663.0,150.0 664.4,149.2 665.7,149.2 666.6,148.2 667.4,149.2 668.5,150.5 669.5,151.0 670.2,151.9 671.0,153.0 672.2,153.9 672.7,154.6 674.2,155.0 675.4,155.9 676.5,156.4 677.6,157.1 678.4,157.5 679.9,157.9 680.8,158.0 682.2,159.1 683.2,158.9 684.3,159.2 685.8,160.5 687.1,160.3 687.4,161.1 687.8,162.5 687.7,164.0 688.1,164.8 688.5,166.1 689.1,167.6 689.2,168.8 689.6,169.3 690.3,170.6 690.4,172.0 690.7,173.3 691.1,174.5 691.8,175.4 691.7,176.8 692.3,177.6 693.1,178.3 693.7,180.1 694.3,180.9 694.8,182.2 695.2,183.6 696.2,184.7 696.7,185.3 697.3,186.2 697.8,187.1 698.7,188.5 699.7,189.1 700.3,189.7 701.2,190.7 702.0,192.0 703.0,192.5 703.5,193.9 704.2,194.6 705.0,196.2 706.0,197.3 706.6,198.6 707.1,199.6 707.4,200.2 708.0,201.9 709.1,202.8 709.3,203.8 709.6,205.2 710.5,206.1 710.3,207.2 710.9,209.1 711.6,209.9 711.6,210.8 712.0,212.6 712.6,214.1 713.2,215.1 713.4,216.3 713.6,216.8 714.2,218.4 714.4,219.3 714.7,221.2 715.9,222.3 716.8,222.9 717.4,224.0 718.2,225.5 718.5,225.8 719.3,227.5 720.2,228.0 721.2,229.9 722.2,228.8 723.6,229.0 724.3,228.5 725.9,228.7 727.0,228.1 727.5,226.7 728.6,225.8 728.8,225.0 729.4,223.6 730.3,223.0 731.1,222.1 731.6,220.4 732.5,219.4 733.0,218.7 733.6,217.8 733.9,216.6 734.7,215.2 734.9,214.5 735.7,212.5 736.0,212.2 736.5,210.5 737.4,209.7 737.8,208.5 738.0,206.6 739.1,206.2 739.0,204.2 739.9,204.1 740.6,202.8 741.8,201.8 742.5,200.3 742.8,199.1 743.9,198.1 744.8,197.7 745.5,197.6 746.7,197.1 747.9,197.1 749.5,197.0 749.5,198.1 750.4,199.1 750.9,200.0 751.5,201.3 751.8,201.7 752.6,203.0 753.1,203.8 753.8,204.9 754.4,206.8 754.7,207.2 755.4,208.4 756.0,209.3 757.1,210.8 757.5,211.3 758.5,213.1 759.3,213.4 759.8,214.6 760.8,215.4 761.5,217.3 762.8,216.7 763.5,217.2 765.1,218.1 766.2,218.4 767.3,218.9 768.8,219.9 770.2,220.4 771.4,220.8" fill="none" stroke="#1fa845" stroke-width="1.15" stroke-linejoin="round" stroke-linecap="round"/>
<path d="M544.6 89.5 V332.5" stroke="#777" stroke-width="1.2" fill="none"/><path d="M544 89.8 H772.5" stroke="#8c8c8c" stroke-width="1.1" fill="none"/>
<path d="M772.1 90 V332.5" stroke="#8e8e8e" stroke-width="1.1" fill="none"/>
</svg>
<span class="t" style="left:41.8px;top:98.22px;font-size:10.5px;line-height:10.5px;color:#3a3a9e;transform:scaleX(0.959);-webkit-text-stroke:0.25px #3a3a9e;">15,0</span>
<span class="t" style="left:41.8px;top:152.22px;font-size:10.5px;line-height:10.5px;color:#3a3a9e;transform:scaleX(1.041);-webkit-text-stroke:0.25px #3a3a9e;">7,5</span>
<span class="t" style="left:41.8px;top:206.72px;font-size:10.5px;line-height:10.5px;color:#3a3a9e;transform:scaleX(1.041);-webkit-text-stroke:0.25px #3a3a9e;">0,0</span>
<span class="t" style="left:41.8px;top:261.23px;font-size:10.5px;line-height:10.5px;color:#3a3a9e;transform:scaleX(0.984);-webkit-text-stroke:0.25px #3a3a9e;">-7,5</span>
<span class="t" style="left:41.8px;top:316.23px;font-size:10.5px;line-height:10.5px;color:#3a3a9e;transform:scaleX(0.928);-webkit-text-stroke:0.25px #3a3a9e;">-15,0</span>
<span class="t" style="left:424px;top:320.73px;font-size:10.5px;line-height:10.5px;color:#3434b4;transform:scaleX(0.959);background:#fff;">Timebase 479 S/Division</span>
<span class="t" style="left:656px;top:320.73px;font-size:10.5px;line-height:10.5px;color:#3434b4;transform:scaleX(0.950);background:#fff;">Timebase 120 S/Division</span>
<div style="position:absolute;left:544.2px;top:332.8px;width:83.6px;height:15.2px;background:#fff;border-top:1px solid #8a8a8a;box-sizing:border-box;"></div>
<div style="position:absolute;left:544.2px;top:332.8px;width:15.2px;height:15.2px;box-sizing:border-box;background:#f0f0f0;border-top:1px solid #fff;border-left:1px solid #fff;border-right:1.8px solid #6a6a6a;border-bottom:1.8px solid #6a6a6a;"></div>
<svg width="800" height="659"><path d="M552.9000000000001 336.70000000000005 L549.7 339.90000000000003 L552.9000000000001 343.1 Z" fill="#000"/></svg>
<div style="position:absolute;left:612.6px;top:332.8px;width:15.2px;height:15.2px;box-sizing:border-box;background:#f0f0f0;border-top:1px solid #fff;border-left:1px solid #fff;border-right:1.8px solid #6a6a6a;border-bottom:1.8px solid #6a6a6a;"></div>
<svg width="800" height="659"><path d="M618.1 336.70000000000005 L621.3000000000001 339.90000000000003 L618.1 343.1 Z" fill="#000"/></svg>
<div style="position:absolute;left:581px;top:332.8px;width:6.5px;height:15.2px;box-sizing:border-box;background:#f0f0f0;border-top:1px solid #fff;border-left:1px solid #fff;border-right:1.8px solid #6a6a6a;border-bottom:1.8px solid #6a6a6a;"></div>
<span class="t" style="left:611.5px;top:349.03px;font-size:10.5px;line-height:10.5px;color:#151515;transform:scaleX(0.913);">479</span>
<div style="position:absolute;left:635px;top:333.5px;width:135.5px;height:17.5px;box-sizing:border-box;background:#fff;border-top:1.5px solid #666;border-left:1.5px solid #666;border-right:1px solid #ddd;border-bottom:1px solid #ddd;"></div>
<span class="t" style="left:639.5px;top:337.03px;font-size:10.5px;line-height:10.5px;color:#111;transform:scaleX(0.954);">478.7 Worm Drive</span>
<div style="position:absolute;left:755px;top:335.5px;width:13.5px;height:13.5px;box-sizing:border-box;background:#f0f0f0;border-top:1px solid #fff;border-left:1px solid #fff;border-right:1.8px solid #6a6a6a;border-bottom:1.8px solid #6a6a6a;"></div>
<svg width="800" height="659"><path d="M758.1 340.3 L761.5 343.7 L764.9 340.3 Z" fill="#000"/></svg>
<div style="position:absolute;left:21px;top:349.6px;width:11px;height:11px;box-sizing:border-box;background:#fcfcfc;border-top:2px solid #7c7c7c;border-left:2px solid #7c7c7c;border-right:1px solid #fdfdfd;border-bottom:1px solid #fdfdfd;"></div>
<svg width="800" height="659"><path d="M24.00 355.20 L26.30 357.60 L30.40 353.00" stroke="#000" stroke-width="2" fill="none"/></svg>
<span class="t" style="left:40px;top:349.75px;font-size:11px;line-height:11px;color:#8a8a8a;transform:scaleX(1.027);">Raw</span>
<div style="position:absolute;left:112px;top:349.6px;width:11px;height:11px;box-sizing:border-box;background:#fcfcfc;border-top:2px solid #7c7c7c;border-left:2px solid #7c7c7c;border-right:1px solid #fdfdfd;border-bottom:1px solid #fdfdfd;"></div>
<svg width="800" height="659"><path d="M115.00 355.20 L117.30 357.60 L121.40 353.00" stroke="#000" stroke-width="2" fill="none"/></svg>
<span class="t" style="left:130.8px;top:349.75px;font-size:11px;line-height:11px;color:#0a0acc;font-weight:bold;transform:scaleX(1.035);">Raw-Trend</span>
<div style="position:absolute;left:232.6px;top:349.6px;width:11px;height:11px;box-sizing:border-box;background:#fcfcfc;border-top:2px solid #7c7c7c;border-left:2px solid #7c7c7c;border-right:1px solid #fdfdfd;border-bottom:1px solid #fdfdfd;"></div>
<svg width="800" height="659"><path d="M235.60 355.20 L237.90 357.60 L242.00 353.00" stroke="#000" stroke-width="2" fill="none"/></svg>
<span class="t" style="left:251.8px;top:349.75px;font-size:11px;line-height:11px;color:#10c020;font-weight:bold;transform:scaleX(0.924);">Bruit</span>
<div style="position:absolute;left:323.8px;top:349.6px;width:11px;height:11px;box-sizing:border-box;background:#fcfcfc;border-top:2px solid #7c7c7c;border-left:2px solid #7c7c7c;border-right:1px solid #fdfdfd;border-bottom:1px solid #fdfdfd;"></div>
<svg width="800" height="659"><path d="M326.80 355.20 L329.10 357.60 L333.20 353.00" stroke="#000" stroke-width="2" fill="none"/></svg>
<span class="t" style="left:342.5px;top:349.75px;font-size:11px;line-height:11px;color:#e0102a;font-weight:bold;transform:scaleX(0.977);">Lissage</span>
<div style="position:absolute;left:437.6px;top:349.6px;width:11px;height:11px;box-sizing:border-box;background:#fcfcfc;border-top:2px solid #7c7c7c;border-left:2px solid #7c7c7c;border-right:1px solid #fdfdfd;border-bottom:1px solid #fdfdfd;"></div>
<svg width="800" height="659"><path d="M440.60 355.20 L442.90 357.60 L447.00 353.00" stroke="#000" stroke-width="2" fill="none"/></svg>
<span class="t" style="left:455px;top:349.75px;font-size:11px;line-height:11px;color:#151515;transform:scaleX(0.892);">Régression linéaire</span>
<span class="t" style="left:28.8px;top:387.03px;font-size:10.5px;line-height:10.5px;color:#2a2a2a;transform:scaleX(0.946);">Capture Declination:</span>
<span class="t" style="left:123px;top:387.03px;font-size:10.5px;line-height:10.5px;color:#0c0c0c;transform:scaleX(0.948);-webkit-text-stroke:0.3px #0c0c0c;">0,00 deg</span>
<span class="t" style="left:28.8px;top:400.36px;font-size:10.5px;line-height:10.5px;color:#2a2a2a;transform:scaleX(0.942);">Capture Resolution:</span>
<span class="t" style="left:121px;top:400.36px;font-size:10.5px;line-height:10.5px;color:#0c0c0c;transform:scaleX(0.991);-webkit-text-stroke:0.3px #0c0c0c;">1,93 asec/px</span>
<span class="t" style="left:28.8px;top:413.69px;font-size:10.5px;line-height:10.5px;color:#2a2a2a;transform:scaleX(0.946);">Période de l&#x27;axe:</span>
<span class="t" style="left:120px;top:413.69px;font-size:10.5px;line-height:10.5px;color:#0c0c0c;transform:scaleX(0.971);-webkit-text-stroke:0.3px #0c0c0c;">479 Secs</span>
<span class="t" style="left:28.8px;top:427.01px;font-size:10.5px;line-height:10.5px;color:#2a2a2a;transform:scaleX(0.953);">Pas/révolution:</span>
<span class="t" style="left:120px;top:427.01px;font-size:10.5px;line-height:10.5px;color:#0c0c0c;transform:scaleX(0.942);-webkit-text-stroke:0.3px #0c0c0c;">50133</span>
<span class="t" style="left:28.8px;top:440.34px;font-size:10.5px;line-height:10.5px;color:#2a2a2a;transform:scaleX(0.950);">No. d&#x27;échantillons:</span>
<span class="t" style="left:120.75px;top:440.34px;font-size:10.5px;line-height:10.5px;color:#0c0c0c;transform:scaleX(0.899);-webkit-text-stroke:0.3px #0c0c0c;">1079</span>
<span class="t" style="left:28.8px;top:453.67px;font-size:10.5px;line-height:10.5px;color:#2a2a2a;transform:scaleX(0.922);">Echantillon Int.:</span>
<span class="t" style="left:120.5px;top:453.67px;font-size:10.5px;line-height:10.5px;color:#0c0c0c;transform:scaleX(0.953);-webkit-text-stroke:0.3px #0c0c0c;">1,00 Secs</span>
<span class="t" style="left:28.8px;top:480.53px;font-size:10.5px;line-height:10.5px;color:#151515;transform:scaleX(0.971);">Trend: Y = 0,0194X + 4,8</span>
<span class="t" style="left:28.8px;top:506.73px;font-size:10.5px;line-height:10.5px;color:#2a2a2a;transform:scaleX(0.874);">Pointe EP+:</span>
<span class="t" style="left:120px;top:506.73px;font-size:10.5px;line-height:10.5px;color:#0c0c0c;transform:scaleX(0.994);-webkit-text-stroke:0.3px #0c0c0c;">10,20 arcsecs</span>
<span class="t" style="left:28.8px;top:520.02px;font-size:10.5px;line-height:10.5px;color:#2a2a2a;transform:scaleX(0.889);">Pointe EP-:</span>
<span class="t" style="left:120px;top:520.02px;font-size:10.5px;line-height:10.5px;color:#0c0c0c;transform:scaleX(0.991);-webkit-text-stroke:0.3px #0c0c0c;">-11,97 arcsecs</span>
<span class="t" style="left:28.8px;top:533.32px;font-size:10.5px;line-height:10.5px;color:#2a2a2a;transform:scaleX(0.838);">RMS EP:</span>
<span class="t" style="left:120px;top:533.32px;font-size:10.5px;line-height:10.5px;color:#0c0c0c;transform:scaleX(1.025);-webkit-text-stroke:0.3px #0c0c0c;">5,92 arcsecs</span>
<span class="t" style="left:28.8px;top:546.62px;font-size:10.5px;line-height:10.5px;color:#2a2a2a;transform:scaleX(0.945);">Taux max:</span>
<span class="t" style="left:120px;top:546.62px;font-size:10.5px;line-height:10.5px;color:#0c0c0c;transform:scaleX(0.997);-webkit-text-stroke:0.3px #0c0c0c;">0,71 arcsec/S</span>
<span class="t" style="left:28.8px;top:559.92px;font-size:10.5px;line-height:10.5px;color:#2a2a2a;transform:scaleX(0.945);">Taux max:</span>
<span class="t" style="left:120px;top:559.92px;font-size:10.5px;line-height:10.5px;color:#0c0c0c;transform:scaleX(0.988);-webkit-text-stroke:0.3px #0c0c0c;">0,05 x sidereal</span>
<span class="t" style="left:28.8px;top:573.22px;font-size:10.5px;line-height:10.5px;color:#2a2a2a;transform:scaleX(0.917);">EP+ moyen:</span>
<span class="t" style="left:120px;top:573.22px;font-size:10.5px;line-height:10.5px;color:#0c0c0c;transform:scaleX(1.008);-webkit-text-stroke:0.3px #0c0c0c;">5,78 arcsecs</span>
<span class="t" style="left:28.8px;top:586.52px;font-size:10.5px;line-height:10.5px;color:#2a2a2a;transform:scaleX(0.924);">EP- moyen:</span>
<span class="t" style="left:120px;top:586.52px;font-size:10.5px;line-height:10.5px;color:#0c0c0c;transform:scaleX(0.992);-webkit-text-stroke:0.3px #0c0c0c;">-4,79 arcsecs</span>
<span class="t" style="left:28.8px;top:599.82px;font-size:10.5px;line-height:10.5px;color:#2a2a2a;transform:scaleX(0.936);">Delta+ Max:</span>
<span class="t" style="left:120px;top:599.82px;font-size:10.5px;line-height:10.5px;color:#0c0c0c;transform:scaleX(1.008);-webkit-text-stroke:0.3px #0c0c0c;">0,71 arcsecs</span>
<span class="t" style="left:28.8px;top:613.12px;font-size:10.5px;line-height:10.5px;color:#2a2a2a;transform:scaleX(0.945);">Delta- Max:</span>
<span class="t" style="left:120px;top:613.12px;font-size:10.5px;line-height:10.5px;color:#0c0c0c;transform:scaleX(1.000);-webkit-text-stroke:0.3px #0c0c0c;">-0,64 arcsecs</span>
<div style="position:absolute;left:209.9px;top:386px;width:122.6px;height:158px;box-sizing:border-box;background:#fff;border-top:1.5px solid #707070;border-left:1.5px solid #707070;border-bottom:1px solid #e8e8e8;"></div>
<div style="position:absolute;left:213.2px;top:388.0px;width:10px;height:10px;box-sizing:border-box;background:#fff;border-top:1px solid #b0b0b0;border-left:1px solid #b0b0b0;border-right:1px solid #fdfdfd;border-bottom:1px solid #fdfdfd;"></div>
<span class="t" style="left:227px;top:387.53px;font-size:10.5px;line-height:10.5px;color:#111;transform:scaleX(0.868);">Mag.</span>
<span class="t" style="left:257.2px;top:387.53px;font-size:10.5px;line-height:10.5px;color:#111;transform:scaleX(0.934);">Période</span>
<div style="position:absolute;left:213.2px;top:402.22px;width:10px;height:10px;box-sizing:border-box;background:#fff;border-top:1px solid #b0b0b0;border-left:1px solid #b0b0b0;border-right:1px solid #fdfdfd;border-bottom:1px solid #fdfdfd;"></div>
<svg width="800" height="659"><path d="M215.93 407.31 L218.02 409.49 L221.75 405.31" stroke="#000" stroke-width="2" fill="none"/></svg>
<span class="t" style="left:227px;top:401.75px;font-size:10.5px;line-height:10.5px;color:#111;transform:scaleX(0.952);">100,0</span>
<span class="t" style="left:257.2px;top:401.75px;font-size:10.5px;line-height:10.5px;color:#111;transform:scaleX(0.953);">481,8</span>
<div style="position:absolute;left:213.2px;top:416.44000000000005px;width:10px;height:10px;box-sizing:border-box;background:#fff;border-top:1px solid #b0b0b0;border-left:1px solid #b0b0b0;border-right:1px solid #fdfdfd;border-bottom:1px solid #fdfdfd;"></div>
<svg width="800" height="659"><path d="M215.93 421.53 L218.02 423.71 L221.75 419.53" stroke="#000" stroke-width="2" fill="none"/></svg>
<span class="t" style="left:227px;top:415.97px;font-size:10.5px;line-height:10.5px;color:#111;transform:scaleX(0.991);">40,9</span>
<span class="t" style="left:257.2px;top:415.97px;font-size:10.5px;line-height:10.5px;color:#111;transform:scaleX(0.953);">240,9</span>
<div style="position:absolute;left:213.2px;top:430.6600000000001px;width:10px;height:10px;box-sizing:border-box;background:#fff;border-top:1px solid #b0b0b0;border-left:1px solid #b0b0b0;border-right:1px solid #fdfdfd;border-bottom:1px solid #fdfdfd;"></div>
<svg width="800" height="659"><path d="M215.93 435.75 L218.02 437.93 L221.75 433.75" stroke="#000" stroke-width="2" fill="none"/></svg>
<span class="t" style="left:227px;top:430.19px;font-size:10.5px;line-height:10.5px;color:#111;transform:scaleX(0.991);">31,8</span>
<span class="t" style="left:257.2px;top:430.19px;font-size:10.5px;line-height:10.5px;color:#111;transform:scaleX(0.953);">157,4</span>
<div style="position:absolute;left:213.2px;top:444.8800000000001px;width:10px;height:10px;box-sizing:border-box;background:#fff;border-top:1px solid #b0b0b0;border-left:1px solid #b0b0b0;border-right:1px solid #fdfdfd;border-bottom:1px solid #fdfdfd;"></div>
<svg width="800" height="659"><path d="M215.93 449.97 L218.02 452.15 L221.75 447.97" stroke="#000" stroke-width="2" fill="none"/></svg>
<span class="t" style="left:227px;top:444.41px;font-size:10.5px;line-height:10.5px;color:#111;transform:scaleX(0.991);">21,8</span>
<span class="t" style="left:257.2px;top:444.41px;font-size:10.5px;line-height:10.5px;color:#111;transform:scaleX(0.900);">94,1</span>
<div style="position:absolute;left:213.2px;top:459.10000000000014px;width:10px;height:10px;box-sizing:border-box;background:#fff;border-top:1px solid #b0b0b0;border-left:1px solid #b0b0b0;border-right:1px solid #fdfdfd;border-bottom:1px solid #fdfdfd;"></div>
<svg width="800" height="659"><path d="M215.93 464.19 L218.02 466.37 L221.75 462.19" stroke="#000" stroke-width="2" fill="none"/></svg>
<span class="t" style="left:227px;top:458.63px;font-size:10.5px;line-height:10.5px;color:#111;transform:scaleX(0.922);">20,1</span>
<span class="t" style="left:257.2px;top:458.63px;font-size:10.5px;line-height:10.5px;color:#111;transform:scaleX(0.983);">118,6</span>
<div style="position:absolute;left:213.2px;top:473.32000000000016px;width:10px;height:10px;box-sizing:border-box;background:#fff;border-top:1px solid #b0b0b0;border-left:1px solid #b0b0b0;border-right:1px solid #fdfdfd;border-bottom:1px solid #fdfdfd;"></div>
<svg width="800" height="659"><path d="M215.93 478.41 L218.02 480.59 L221.75 476.41" stroke="#000" stroke-width="2" fill="none"/></svg>
<span class="t" style="left:227px;top:472.85px;font-size:10.5px;line-height:10.5px;color:#111;transform:scaleX(0.959);">11,2</span>
<span class="t" style="left:257.2px;top:472.85px;font-size:10.5px;line-height:10.5px;color:#111;transform:scaleX(0.953);">190,7</span>
<div style="position:absolute;left:213.2px;top:487.5400000000002px;width:10px;height:10px;box-sizing:border-box;background:#fff;border-top:1px solid #b0b0b0;border-left:1px solid #b0b0b0;border-right:1px solid #fdfdfd;border-bottom:1px solid #fdfdfd;"></div>
<svg width="800" height="659"><path d="M215.93 492.63 L218.02 494.81 L221.75 490.63" stroke="#000" stroke-width="2" fill="none"/></svg>
<span class="t" style="left:227px;top:487.07px;font-size:10.5px;line-height:10.5px;color:#111;transform:scaleX(0.991);">10,6</span>
<span class="t" style="left:257.2px;top:487.07px;font-size:10.5px;line-height:10.5px;color:#111;transform:scaleX(0.959);">1621,5</span>
<div style="position:absolute;left:213.2px;top:501.7600000000002px;width:10px;height:10px;box-sizing:border-box;background:#fff;border-top:1px solid #b0b0b0;border-left:1px solid #b0b0b0;border-right:1px solid #fdfdfd;border-bottom:1px solid #fdfdfd;"></div>
<svg width="800" height="659"><path d="M215.93 506.85 L218.02 509.03 L221.75 504.85" stroke="#000" stroke-width="2" fill="none"/></svg>
<span class="t" style="left:227px;top:501.29px;font-size:10.5px;line-height:10.5px;color:#111;transform:scaleX(0.925);">7,7</span>
<span class="t" style="left:257.2px;top:501.29px;font-size:10.5px;line-height:10.5px;color:#111;transform:scaleX(0.900);">78,0</span>
<div style="position:absolute;left:213.2px;top:515.9800000000002px;width:10px;height:10px;box-sizing:border-box;background:#fff;border-top:1px solid #b0b0b0;border-left:1px solid #b0b0b0;border-right:1px solid #fdfdfd;border-bottom:1px solid #fdfdfd;"></div>
<svg width="800" height="659"><path d="M215.93 521.07 L218.02 523.25 L221.75 519.07" stroke="#000" stroke-width="2" fill="none"/></svg>
<span class="t" style="left:227px;top:515.51px;font-size:10.5px;line-height:10.5px;color:#111;transform:scaleX(0.925);">5,4</span>
<span class="t" style="left:257.2px;top:515.51px;font-size:10.5px;line-height:10.5px;color:#111;transform:scaleX(0.900);">84,4</span>
<div style="position:absolute;left:226px;top:528.9000000000003px;width:105.5px;height:13.3px;background:#3399ff;"></div>
<div style="position:absolute;left:213.2px;top:530.2000000000003px;width:10px;height:10px;box-sizing:border-box;background:#fff;border-top:1px solid #b0b0b0;border-left:1px solid #b0b0b0;border-right:1px solid #fdfdfd;border-bottom:1px solid #fdfdfd;"></div>
<svg width="800" height="659"><path d="M215.93 535.29 L218.02 537.47 L221.75 533.29" stroke="#000" stroke-width="2" fill="none"/></svg>
<span class="t" style="left:227px;top:529.73px;font-size:10.5px;line-height:10.5px;color:#fff;transform:scaleX(0.925);">5,0</span>
<span class="t" style="left:257.2px;top:529.73px;font-size:10.5px;line-height:10.5px;color:#fff;transform:scaleX(0.900);">72,4</span>
<svg width="800" height="659" viewBox="0 0 800 659">
<rect x="332" y="386.3" width="416.5" height="157.9" fill="#000"/>
<path d="M387.37 535.4 V541" stroke="#1c5a22" stroke-width="1.9"/><path d="M387.37 535.4 V541" stroke="#3a8a40" stroke-width="0.8"/>
<path d="M419.00 532.0 V541" stroke="#2a7a30" stroke-width="1.9"/><path d="M419.00 532.0 V541" stroke="#62b466" stroke-width="0.8"/>
<path d="M441.44 527.0 V541" stroke="#2a7a30" stroke-width="1.9"/><path d="M441.44 527.0 V541" stroke="#62b466" stroke-width="0.8"/>
<path d="M458.85 525.0 V541" stroke="#2a7a30" stroke-width="1.9"/><path d="M458.85 525.0 V541" stroke="#62b466" stroke-width="0.8"/>
<path d="M473.07 526.0 V541" stroke="#2a7a30" stroke-width="1.9"/><path d="M473.07 526.0 V541" stroke="#62b466" stroke-width="0.8"/>
<path d="M485.09 529.2 V541" stroke="#2a7a30" stroke-width="1.9"/><path d="M485.09 529.2 V541" stroke="#62b466" stroke-width="0.8"/>
<path d="M495.51 532.3 V541" stroke="#2a7a30" stroke-width="1.9"/><path d="M495.51 532.3 V541" stroke="#62b466" stroke-width="0.8"/>
<path d="M504.69 521.5 V541" stroke="#2a8430" stroke-width="1.9"/><path d="M504.69 521.5 V541" stroke="#5cbc60" stroke-width="0.8"/>
<path d="M512.91 503.0 V541" stroke="#2a8430" stroke-width="1.9"/><path d="M512.91 503.0 V541" stroke="#5cbc60" stroke-width="0.8"/>
<path d="M520.35 479.8 V541" stroke="#2a8430" stroke-width="1.9"/><path d="M520.35 479.8 V541" stroke="#5cbc60" stroke-width="0.8"/>
<path d="M527.13 457.0 V541" stroke="#2a8430" stroke-width="1.9"/><path d="M527.13 457.0 V541" stroke="#5cbc60" stroke-width="0.8"/>
<path d="M533.38 437.0 V541" stroke="#2a8430" stroke-width="1.9"/><path d="M533.38 437.0 V541" stroke="#5cbc60" stroke-width="0.8"/>
<path d="M539.16 416.6 V541" stroke="#2a8430" stroke-width="1.9"/><path d="M539.16 416.6 V541" stroke="#5cbc60" stroke-width="0.8"/>
<path d="M544.54 400.2 V541" stroke="#2a8430" stroke-width="1.9"/><path d="M544.54 400.2 V541" stroke="#5cbc60" stroke-width="0.8"/>
<path d="M549.57 393.8 V541" stroke="#2a8430" stroke-width="1.9"/><path d="M549.57 393.8 V541" stroke="#5cbc60" stroke-width="0.8"/>
<path d="M554.30 392.6 V541" stroke="#2a8430" stroke-width="1.9"/><path d="M554.30 392.6 V541" stroke="#5cbc60" stroke-width="0.8"/>
<path d="M558.76 398.8 V541" stroke="#2a8430" stroke-width="1.9"/><path d="M558.76 398.8 V541" stroke="#5cbc60" stroke-width="0.8"/>
<path d="M562.98 412.1 V541" stroke="#2a8430" stroke-width="1.9"/><path d="M562.98 412.1 V541" stroke="#5cbc60" stroke-width="0.8"/>
<path d="M566.98 427.9 V541" stroke="#2a8430" stroke-width="1.9"/><path d="M566.98 427.9 V541" stroke="#5cbc60" stroke-width="0.8"/>
<path d="M570.78 448.9 V541" stroke="#2a8430" stroke-width="1.9"/><path d="M570.78 448.9 V541" stroke="#5cbc60" stroke-width="0.8"/>
<path d="M574.41 467.0 V541" stroke="#2a8430" stroke-width="1.9"/><path d="M574.41 467.0 V541" stroke="#5cbc60" stroke-width="0.8"/>
<path d="M577.88 482.7 V541" stroke="#2a8430" stroke-width="1.9"/><path d="M577.88 482.7 V541" stroke="#5cbc60" stroke-width="0.8"/>
<path d="M581.20 496.1 V541" stroke="#2a8430" stroke-width="1.9"/><path d="M581.20 496.1 V541" stroke="#5cbc60" stroke-width="0.8"/>
<path d="M584.38 505.3 V541" stroke="#2a8430" stroke-width="1.9"/><path d="M584.38 505.3 V541" stroke="#5cbc60" stroke-width="0.8"/>
<path d="M587.44 511.2 V541" stroke="#2a8430" stroke-width="1.9"/><path d="M587.44 511.2 V541" stroke="#5cbc60" stroke-width="0.8"/>
<path d="M590.38 515.2 V541" stroke="#2a8430" stroke-width="1.9"/><path d="M590.38 515.2 V541" stroke="#5cbc60" stroke-width="0.8"/>
<path d="M593.22 515.9 V541" stroke="#2a8430" stroke-width="1.9"/><path d="M593.22 515.9 V541" stroke="#5cbc60" stroke-width="0.8"/>
<path d="M595.96 511.5 V541" stroke="#2a8430" stroke-width="1.9"/><path d="M595.96 511.5 V541" stroke="#5cbc60" stroke-width="0.8"/>
<path d="M598.60 502.3 V541" stroke="#2a8430" stroke-width="1.9"/><path d="M598.60 502.3 V541" stroke="#5cbc60" stroke-width="0.8"/>
<path d="M601.16 493.4 V541" stroke="#2a8430" stroke-width="1.9"/><path d="M601.16 493.4 V541" stroke="#5cbc60" stroke-width="0.8"/>
<path d="M603.64 484.1 V541" stroke="#2a8430" stroke-width="1.9"/><path d="M603.64 484.1 V541" stroke="#5cbc60" stroke-width="0.8"/>
<path d="M606.04 480.7 V541" stroke="#2a8430" stroke-width="1.9"/><path d="M606.04 480.7 V541" stroke="#5cbc60" stroke-width="0.8"/>
<path d="M608.37 480.5 V541" stroke="#2aa832" stroke-width="1.9"/><path d="M608.37 480.5 V541" stroke="#4cdc52" stroke-width="0.8"/>
<path d="M610.63 489.0 V541" stroke="#2aa832" stroke-width="1.9"/><path d="M610.63 489.0 V541" stroke="#4cdc52" stroke-width="0.8"/>
<path d="M612.82 499.2 V541" stroke="#2aa832" stroke-width="1.9"/><path d="M612.82 499.2 V541" stroke="#4cdc52" stroke-width="0.8"/>
<path d="M614.96 511.2 V541" stroke="#2aa832" stroke-width="1.9"/><path d="M614.96 511.2 V541" stroke="#4cdc52" stroke-width="0.8"/>
<path d="M617.04 522.4 V541" stroke="#2aa832" stroke-width="1.9"/><path d="M617.04 522.4 V541" stroke="#4cdc52" stroke-width="0.8"/>
<path d="M619.07 530.1 V541" stroke="#2aa832" stroke-width="1.9"/><path d="M619.07 530.1 V541" stroke="#4cdc52" stroke-width="0.8"/>
<path d="M621.04 534.1 V541" stroke="#2aa832" stroke-width="1.9"/><path d="M621.04 534.1 V541" stroke="#4cdc52" stroke-width="0.8"/>
<path d="M622.97 528.8 V541" stroke="#2aa832" stroke-width="1.9"/><path d="M622.97 528.8 V541" stroke="#4cdc52" stroke-width="0.8"/>
<path d="M624.85 526.0 V541" stroke="#2aa832" stroke-width="1.9"/><path d="M624.85 526.0 V541" stroke="#4cdc52" stroke-width="0.8"/>
<path d="M626.68 525.8 V541" stroke="#2aa832" stroke-width="1.9"/><path d="M626.68 525.8 V541" stroke="#4cdc52" stroke-width="0.8"/>
<path d="M628.48 532.9 V541" stroke="#2aa832" stroke-width="1.9"/><path d="M628.48 532.9 V541" stroke="#4cdc52" stroke-width="0.8"/>
<path d="M630.23 536.1 V541" stroke="#2aa832" stroke-width="1.9"/><path d="M630.23 536.1 V541" stroke="#4cdc52" stroke-width="0.8"/>
<path d="M631.94 533.0 V541" stroke="#2aa832" stroke-width="1.9"/><path d="M631.94 533.0 V541" stroke="#4cdc52" stroke-width="0.8"/>
<path d="M633.62 527.0 V541" stroke="#2aa832" stroke-width="1.9"/><path d="M633.62 527.0 V541" stroke="#4cdc52" stroke-width="0.8"/>
<path d="M635.26 515.8 V541" stroke="#2aa832" stroke-width="1.9"/><path d="M635.26 515.8 V541" stroke="#4cdc52" stroke-width="0.8"/>
<path d="M636.87 507.7 V541" stroke="#2aa832" stroke-width="1.9"/><path d="M636.87 507.7 V541" stroke="#4cdc52" stroke-width="0.8"/>
<path d="M638.45 499.0 V541" stroke="#2aa832" stroke-width="1.9"/><path d="M638.45 499.0 V541" stroke="#4cdc52" stroke-width="0.8"/>
<path d="M639.99 495.3 V541" stroke="#2aa832" stroke-width="1.9"/><path d="M639.99 495.3 V541" stroke="#4cdc52" stroke-width="0.8"/>
<path d="M641.51 495.0 V541" stroke="#2aa832" stroke-width="1.9"/><path d="M641.51 495.0 V541" stroke="#4cdc52" stroke-width="0.8"/>
<path d="M642.99 499.6 V541" stroke="#2aa832" stroke-width="1.9"/><path d="M642.99 499.6 V541" stroke="#4cdc52" stroke-width="0.8"/>
<path d="M644.45 505.1 V541" stroke="#2aa832" stroke-width="1.9"/><path d="M644.45 505.1 V541" stroke="#4cdc52" stroke-width="0.8"/>
<path d="M645.88 512.6 V541" stroke="#2aa832" stroke-width="1.9"/><path d="M645.88 512.6 V541" stroke="#4cdc52" stroke-width="0.8"/>
<path d="M647.29 520.6 V541" stroke="#2cf02c" stroke-width="1.5"/>
<path d="M648.67 529.1 V541" stroke="#2cf02c" stroke-width="1.5"/>
<path d="M650.02 535.8 V541" stroke="#2cf02c" stroke-width="1.5"/>
<path d="M651.36 537.5 V541" stroke="#2cf02c" stroke-width="1.5"/>
<path d="M652.67 539.5 V541" stroke="#2cf02c" stroke-width="1.5"/>
<path d="M653.96 537.6 V541" stroke="#2cf02c" stroke-width="1.5"/>
<path d="M655.23 535.2 V541" stroke="#2cf02c" stroke-width="1.5"/>
<path d="M656.47 532.2 V541" stroke="#2cf02c" stroke-width="1.5"/>
<path d="M657.70 527.1 V541" stroke="#2cf02c" stroke-width="1.5"/>
<path d="M658.91 521.6 V541" stroke="#2cf02c" stroke-width="1.5"/>
<path d="M660.10 517.1 V541" stroke="#2cf02c" stroke-width="1.5"/>
<path d="M661.28 514.0 V541" stroke="#2cf02c" stroke-width="1.5"/>
<path d="M662.43 511.1 V541" stroke="#2cf02c" stroke-width="1.5"/>
<path d="M663.57 510.7 V541" stroke="#2cf02c" stroke-width="1.5"/>
<path d="M664.69 512.6 V541" stroke="#2cf02c" stroke-width="1.5"/>
<path d="M665.80 516.4 V541" stroke="#2cf02c" stroke-width="1.5"/>
<path d="M666.89 520.2 V541" stroke="#2cf02c" stroke-width="1.5"/>
<path d="M667.97 527.3 V541" stroke="#2cf02c" stroke-width="1.5"/>
<path d="M669.03 533.6 V541" stroke="#2cf02c" stroke-width="1.5"/>
<path d="M670.07 537.0 V541" stroke="#2cf02c" stroke-width="1.5"/>
<path d="M671.11 539.5 V541" stroke="#2cf02c" stroke-width="1.5"/>
<path d="M672.13 537.9 V541" stroke="#2cf02c" stroke-width="1.5"/>
<path d="M673.13 536.1 V541" stroke="#2cf02c" stroke-width="1.5"/>
<path d="M674.13 536.2 V541" stroke="#2cf02c" stroke-width="1.5"/>
<path d="M675.11 531.5 V541" stroke="#2cf02c" stroke-width="1.5"/>
<path d="M676.08 528.5 V541" stroke="#2cf02c" stroke-width="1.5"/>
<path d="M677.03 524.0 V541" stroke="#2cf02c" stroke-width="1.5"/>
<path d="M677.98 520.3 V541" stroke="#2cf02c" stroke-width="1.5"/>
<path d="M678.91 517.5 V541" stroke="#2cf02c" stroke-width="1.5"/>
<path d="M679.84 512.6 V541" stroke="#2cf02c" stroke-width="1.5"/>
<path d="M680.75 510.5 V541" stroke="#2cf02c" stroke-width="1.5"/>
<path d="M681.65 510.3 V541" stroke="#2cf02c" stroke-width="1.5"/>
<path d="M682.54 510.3 V541" stroke="#2cf02c" stroke-width="1.5"/>
<path d="M683.42 515.2 V541" stroke="#2cf02c" stroke-width="1.5"/>
<path d="M684.29 518.4 V541" stroke="#2cf02c" stroke-width="1.5"/>
<path d="M685.16 525.2 V541" stroke="#2cf02c" stroke-width="1.5"/>
<path d="M686.01 530.4 V541" stroke="#2cf02c" stroke-width="1.5"/>
<path d="M686.85 534.1 V541" stroke="#2cf02c" stroke-width="1.5"/>
<path d="M687.69 535.5 V541" stroke="#2cf02c" stroke-width="1.5"/>
<path d="M688.51 536.0 V541" stroke="#2cf02c" stroke-width="1.5"/>
<path d="M689.33 534.7 V541" stroke="#2cf02c" stroke-width="1.5"/>
<path d="M690.14 534.5 V541" stroke="#2cf02c" stroke-width="1.5"/>
<path d="M690.94 532.2 V541" stroke="#2cf02c" stroke-width="1.5"/>
<path d="M691.73 533.1 V541" stroke="#2cf02c" stroke-width="1.5"/>
<path d="M692.51 534.4 V541" stroke="#2cf02c" stroke-width="1.5"/>
<path d="M693.29 535.4 V541" stroke="#2cf02c" stroke-width="1.5"/>
<path d="M694.06 532.5 V541" stroke="#2cf02c" stroke-width="1.5"/>
<path d="M694.82 531.2 V541" stroke="#2cf02c" stroke-width="1.5"/>
<path d="M695.57 529.8 V541" stroke="#2cf02c" stroke-width="1.5"/>
<path d="M696.32 530.6 V541" stroke="#2cf02c" stroke-width="1.5"/>
<path d="M697.06 531.6 V541" stroke="#2cf02c" stroke-width="1.5"/>
<path d="M697.79 532.8 V541" stroke="#2cf02c" stroke-width="1.5"/>
<path d="M698.52 533.4 V541" stroke="#2cf02c" stroke-width="1.5"/>
<path d="M699.23 534.9 V541" stroke="#2cf02c" stroke-width="1.5"/>
<path d="M699.95 534.7 V541" stroke="#2cf02c" stroke-width="1.5"/>
<path d="M700.65 535.5 V541" stroke="#2cf02c" stroke-width="1.5"/>
<path d="M701.35 533.9 V541" stroke="#2cf02c" stroke-width="1.5"/>
<path d="M702.05 533.5 V541" stroke="#2cf02c" stroke-width="1.5"/>
<path d="M702.73 534.7 V541" stroke="#2cf02c" stroke-width="1.5"/>
<path d="M703.41 534.6 V541" stroke="#2cf02c" stroke-width="1.5"/>
<path d="M704.09 535.1 V541" stroke="#2cf02c" stroke-width="1.5"/>
<path d="M704.76 535.7 V541" stroke="#2cf02c" stroke-width="1.5"/>
<path d="M705.42 536.1 V541" stroke="#2cf02c" stroke-width="1.5"/>
<path d="M706.08 536.5 V541" stroke="#2cf02c" stroke-width="1.5"/>
<path d="M706.73 535.8 V541" stroke="#2cf02c" stroke-width="1.5"/>
<path d="M707.38 535.4 V541" stroke="#2cf02c" stroke-width="1.5"/>
<path d="M708.02 535.5 V541" stroke="#2cf02c" stroke-width="1.5"/>
<path d="M708.66 535.5 V541" stroke="#2cf02c" stroke-width="1.5"/>
<path d="M709.29 536.2 V541" stroke="#2cf02c" stroke-width="1.5"/>
<path d="M709.92 535.9 V541" stroke="#2cf02c" stroke-width="1.5"/>
<path d="M710.54 535.9 V541" stroke="#2cf02c" stroke-width="1.5"/>
<path d="M711.16 536.8 V541" stroke="#2cf02c" stroke-width="1.5"/>
<path d="M711.77 537.9 V541" stroke="#2cf02c" stroke-width="1.5"/>
<path d="M712.37 537.5 V541" stroke="#2cf02c" stroke-width="1.5"/>
<path d="M712.98 536.7 V541" stroke="#2cf02c" stroke-width="1.5"/>
<path d="M713.57 537.9 V541" stroke="#2cf02c" stroke-width="1.5"/>
<path d="M714.17 536.8 V541" stroke="#2cf02c" stroke-width="1.5"/>
<path d="M714.76 536.6 V541" stroke="#2cf02c" stroke-width="1.5"/>
<path d="M715.34 536.8 V541" stroke="#2cf02c" stroke-width="1.5"/>
<path d="M715.92 536.8 V541" stroke="#2cf02c" stroke-width="1.5"/>
<path d="M716.50 537.2 V541" stroke="#2cf02c" stroke-width="1.5"/>
<path d="M717.07 536.5 V541" stroke="#2cf02c" stroke-width="1.5"/>
<path d="M717.64 536.9 V541" stroke="#2cf02c" stroke-width="1.5"/>
<path d="M718.20 535.5 V541" stroke="#2cf02c" stroke-width="1.5"/>
<path d="M718.76 536.9 V541" stroke="#2cf02c" stroke-width="1.5"/>
<path d="M719.31 535.8 V541" stroke="#2cf02c" stroke-width="1.5"/>
<path d="M719.86 536.9 V541" stroke="#2cf02c" stroke-width="1.5"/>
<path d="M720.41 535.4 V541" stroke="#2cf02c" stroke-width="1.5"/>
<path d="M720.95 537.1 V541" stroke="#2cf02c" stroke-width="1.5"/>
<path d="M721.49 536.1 V541" stroke="#2cf02c" stroke-width="1.5"/>
<path d="M722.03 537.5 V541" stroke="#2cf02c" stroke-width="1.5"/>
<path d="M722.56 537.5 V541" stroke="#2cf02c" stroke-width="1.5"/>
<path d="M723.09 537.4 V541" stroke="#2cf02c" stroke-width="1.5"/>
<path d="M723.62 536.7 V541" stroke="#2cf02c" stroke-width="1.5"/>
<path d="M724.14 536.3 V541" stroke="#2cf02c" stroke-width="1.5"/>
<path d="M724.66 536.8 V541" stroke="#2cf02c" stroke-width="1.5"/>
<path d="M725.17 538.3 V541" stroke="#2cf02c" stroke-width="1.5"/>
<path d="M725.68 536.9 V541" stroke="#2cf02c" stroke-width="1.5"/>
<path d="M726.19 538.0 V541" stroke="#2cf02c" stroke-width="1.5"/>
<path d="M726.70 537.9 V541" stroke="#2cf02c" stroke-width="1.5"/>
<path d="M727.20 538.2 V541" stroke="#2cf02c" stroke-width="1.5"/>
<path d="M727.70 537.3 V541" stroke="#2cf02c" stroke-width="1.5"/>
<path d="M728.19 537.3 V541" stroke="#2cf02c" stroke-width="1.5"/>
<path d="M728.68 537.2 V541" stroke="#2cf02c" stroke-width="1.5"/>
<path d="M729.17 539.1 V541" stroke="#2cf02c" stroke-width="1.5"/>
<path d="M729.66 538.0 V541" stroke="#2cf02c" stroke-width="1.5"/>
<path d="M730.14 538.6 V541" stroke="#2cf02c" stroke-width="1.5"/>
<path d="M730.62 538.5 V541" stroke="#2cf02c" stroke-width="1.5"/>
<path d="M731.10 537.9 V541" stroke="#2cf02c" stroke-width="1.5"/>
<path d="M731.57 537.6 V541" stroke="#2cf02c" stroke-width="1.5"/>
<path d="M732.04 537.5 V541" stroke="#2cf02c" stroke-width="1.5"/>
<path d="M732.51 539.3 V541" stroke="#2cf02c" stroke-width="1.5"/>
<path d="M732.98 537.9 V541" stroke="#2cf02c" stroke-width="1.5"/>
<path d="M733.44 539.6 V541" stroke="#2cf02c" stroke-width="1.5"/>
<path d="M733.90 538.4 V541" stroke="#2cf02c" stroke-width="1.5"/>
<path d="M734.36 539.2 V541" stroke="#2cf02c" stroke-width="1.5"/>
<path d="M734.81 538.1 V541" stroke="#2cf02c" stroke-width="1.5"/>
<path d="M735.27 539.4 V541" stroke="#2cf02c" stroke-width="1.5"/>
<path d="M735.72 538.4 V541" stroke="#2cf02c" stroke-width="1.5"/>
<path d="M736.16 538.6 V541" stroke="#2cf02c" stroke-width="1.5"/>
<path d="M736.61 539.0 V541" stroke="#2cf02c" stroke-width="1.5"/>
<path d="M737.05 538.2 V541" stroke="#2cf02c" stroke-width="1.5"/>
<path d="M737.49 538.3 V541" stroke="#2cf02c" stroke-width="1.5"/>
<path d="M737.93 539.2 V541" stroke="#2cf02c" stroke-width="1.5"/>
<path d="M738.36 538.0 V541" stroke="#2cf02c" stroke-width="1.5"/>
<path d="M738.79 538.0 V541" stroke="#2cf02c" stroke-width="1.5"/>
<path d="M739.22 538.6 V541" stroke="#2cf02c" stroke-width="1.5"/>
<path d="M739.65 537.4 V541" stroke="#2cf02c" stroke-width="1.5"/>
<path d="M740.07 537.2 V541" stroke="#2cf02c" stroke-width="1.5"/>
<path d="M740.50 537.0 V541" stroke="#2cf02c" stroke-width="1.5"/>
<path d="M740.92 537.2 V541" stroke="#2cf02c" stroke-width="1.5"/>
<path d="M741.34 537.0 V541" stroke="#2cf02c" stroke-width="1.5"/>
<path d="M741.75 537.4 V541" stroke="#2cf02c" stroke-width="1.5"/>
<path d="M742.17 536.9 V541" stroke="#2cf02c" stroke-width="1.5"/>
<path d="M742.58 537.5 V541" stroke="#2cf02c" stroke-width="1.5"/>
<path d="M742.99 535.7 V541" stroke="#2cf02c" stroke-width="1.5"/>
<path d="M743.39 537.0 V541" stroke="#2cf02c" stroke-width="1.5"/>
<path d="M743.80 537.4 V541" stroke="#2cf02c" stroke-width="1.5"/>
<path d="M744.20 536.3 V541" stroke="#2cf02c" stroke-width="1.5"/>
<path d="M744.60 536.0 V541" stroke="#2cf02c" stroke-width="1.5"/>
<path d="M745.00 536.9 V541" stroke="#2cf02c" stroke-width="1.5"/>
<path d="M745.40 536.3 V541" stroke="#2cf02c" stroke-width="1.5"/>
<path d="M745.79 537.1 V541" stroke="#2cf02c" stroke-width="1.5"/>
<path d="M746.19 537.7 V541" stroke="#2cf02c" stroke-width="1.5"/>
<path d="M746.58 536.5 V541" stroke="#2cf02c" stroke-width="1.5"/>
<path d="M746.97 536.6 V541" stroke="#2cf02c" stroke-width="1.5"/>
<path d="M747.35 537.4 V541" stroke="#2cf02c" stroke-width="1.5"/>
<path d="M747.74 536.9 V541" stroke="#2cf02c" stroke-width="1.5"/>
<path d="M540.5 386.5 V544.5" stroke="#f4f4f4" stroke-width="1.1"/>
<path d="M331.5 385.9 H765" stroke="#a8a8a8" stroke-width="1"/>
</svg>
<div style="position:absolute;left:748.5px;top:386.6px;width:16px;height:157.9px;background:#fff;border-right:1px solid #9a9a9a;box-sizing:border-box;"></div>
<div style="position:absolute;left:748.5px;top:386.6px;width:16px;height:14px;box-sizing:border-box;background:#f0f0f0;border-top:1px solid #fff;border-left:1px solid #fff;border-right:1.8px solid #6a6a6a;border-bottom:1.8px solid #6a6a6a;"></div>
<svg width="800" height="659"><path d="M752.8 394.70000000000005 L756.0 391.5 L759.2 394.70000000000005 Z" fill="#000"/></svg>
<div style="position:absolute;left:748.5px;top:530.5px;width:16px;height:14px;box-sizing:border-box;background:#f0f0f0;border-top:1px solid #fff;border-left:1px solid #fff;border-right:1.8px solid #6a6a6a;border-bottom:1.8px solid #6a6a6a;"></div>
<svg width="800" height="659"><path d="M752.8 535.4 L756.0 538.6 L759.2 535.4 Z" fill="#000"/></svg>
<div style="position:absolute;left:748.5px;top:401px;width:16px;height:7.6px;box-sizing:border-box;background:#f0f0f0;border-top:1px solid #fff;border-left:1px solid #fff;border-right:1.8px solid #6a6a6a;border-bottom:1.8px solid #6a6a6a;"></div>
<div style="position:absolute;left:582.5px;top:544.8px;width:166.3px;height:14.8px;background:#fff;border-top:1px solid #8a8a8a;box-sizing:border-box;"></div>
<div style="position:absolute;left:582.5px;top:544.8px;width:14.5px;height:14.8px;box-sizing:border-box;background:#f0f0f0;border-top:1px solid #fff;border-left:1px solid #fff;border-right:1.8px solid #6a6a6a;border-bottom:1.8px solid #6a6a6a;"></div>
<svg width="800" height="659"><path d="M590.85 548.4999999999999 L587.65 551.6999999999999 L590.85 554.9 Z" fill="#000"/></svg>
<div style="position:absolute;left:734.3px;top:544.8px;width:14.5px;height:14.8px;box-sizing:border-box;background:#f0f0f0;border-top:1px solid #fff;border-left:1px solid #fff;border-right:1.8px solid #6a6a6a;border-bottom:1.8px solid #6a6a6a;"></div>
<svg width="800" height="659"><path d="M739.4499999999999 548.4999999999999 L742.65 551.6999999999999 L739.4499999999999 554.9 Z" fill="#000"/></svg>
<div style="position:absolute;left:622.5px;top:544.8px;width:7px;height:14.8px;box-sizing:border-box;background:#f0f0f0;border-top:1px solid #fff;border-left:1px solid #fff;border-right:1.8px solid #6a6a6a;border-bottom:1.8px solid #6a6a6a;"></div>
<span class="t" style="left:339.5px;top:545.73px;font-size:10.5px;line-height:10.5px;color:#151515;transform:scaleX(0.930);">Cursor: Period=571,6 S</span>
<div style="position:absolute;left:217.6px;top:582.6px;width:115px;height:30.6px;box-sizing:border-box;background:#f0f0f0;border-top:1px solid #fff;border-left:1px solid #fff;border-right:1.8px solid #6a6a6a;border-bottom:1.8px solid #6a6a6a;"></div>
<span class="t" style="left:253.4px;top:592.33px;font-size:10.5px;line-height:10.5px;color:#151515;transform:scaleX(0.919);">Filtre auto</span>
<span class="t" style="left:354.79999999999995px;top:569.02px;font-size:10.5px;line-height:10.5px;color:#151515;transform:scaleX(0.925);">MagLimite</span>
<span class="t" style="left:470.9px;top:569.02px;font-size:10.5px;line-height:10.5px;color:#151515;transform:scaleX(0.942);">0</span>
<div style="position:absolute;left:354.4px;top:583px;width:122.3px;height:14.5px;background:#fff;border-top:1px solid #8a8a8a;box-sizing:border-box;"></div>
<div style="position:absolute;left:354.4px;top:583px;width:15px;height:14.5px;box-sizing:border-box;background:#f0f0f0;border-top:1px solid #fff;border-left:1px solid #fff;border-right:1.8px solid #6a6a6a;border-bottom:1.8px solid #6a6a6a;"></div>
<svg width="800" height="659"><path d="M363.0 586.55 L359.79999999999995 589.75 L363.0 592.95 Z" fill="#000"/></svg>
<div style="position:absolute;left:461.7px;top:583px;width:15px;height:14.5px;box-sizing:border-box;background:#f0f0f0;border-top:1px solid #fff;border-left:1px solid #fff;border-right:1.8px solid #6a6a6a;border-bottom:1.8px solid #6a6a6a;"></div>
<svg width="800" height="659"><path d="M467.09999999999997 586.55 L470.3 589.75 L467.09999999999997 592.95 Z" fill="#000"/></svg>
<div style="position:absolute;left:370px;top:583px;width:8px;height:14.5px;box-sizing:border-box;background:#f0f0f0;border-top:1px solid #fff;border-left:1px solid #fff;border-right:1.8px solid #6a6a6a;border-bottom:1.8px solid #6a6a6a;"></div>
<div style="position:absolute;left:354.4px;top:598px;width:52.8px;height:15.5px;box-sizing:border-box;background:#f0f0f0;border-top:1px solid #fff;border-left:1px solid #fff;border-right:1.8px solid #6a6a6a;border-bottom:1.8px solid #6a6a6a;"></div>
<span class="t" style="left:368.0px;top:600.18px;font-size:10.5px;line-height:10.5px;color:#151515;transform:scaleX(0.963);">Reset</span>
<div style="position:absolute;left:422.59999999999997px;top:598px;width:54.2px;height:15.5px;box-sizing:border-box;background:#f0f0f0;border-top:1px solid #fff;border-left:1px solid #fff;border-right:1.8px solid #6a6a6a;border-bottom:1.8px solid #6a6a6a;"></div>
<span class="t" style="left:435.79999999999995px;top:600.18px;font-size:10.5px;line-height:10.5px;color:#151515;transform:scaleX(0.897);">Définir</span>
<span class="t" style="left:498.79999999999995px;top:569.02px;font-size:10.5px;line-height:10.5px;color:#151515;transform:scaleX(0.958);">PasseHaut</span>
<span class="t" style="left:614.9px;top:569.02px;font-size:10.5px;line-height:10.5px;color:#151515;transform:scaleX(0.942);">0</span>
<div style="position:absolute;left:498.4px;top:583px;width:122.3px;height:14.5px;background:#fff;border-top:1px solid #8a8a8a;box-sizing:border-box;"></div>
<div style="position:absolute;left:498.4px;top:583px;width:15px;height:14.5px;box-sizing:border-box;background:#f0f0f0;border-top:1px solid #fff;border-left:1px solid #fff;border-right:1.8px solid #6a6a6a;border-bottom:1.8px solid #6a6a6a;"></div>
<svg width="800" height="659"><path d="M507.0 586.55 L503.79999999999995 589.75 L507.0 592.95 Z" fill="#000"/></svg>
<div style="position:absolute;left:605.6999999999999px;top:583px;width:15px;height:14.5px;box-sizing:border-box;background:#f0f0f0;border-top:1px solid #fff;border-left:1px solid #fff;border-right:1.8px solid #6a6a6a;border-bottom:1.8px solid #6a6a6a;"></div>
<svg width="800" height="659"><path d="M611.0999999999999 586.55 L614.3 589.75 L611.0999999999999 592.95 Z" fill="#000"/></svg>
<div style="position:absolute;left:514px;top:583px;width:7.6px;height:14.5px;box-sizing:border-box;background:#f0f0f0;border-top:1px solid #fff;border-left:1px solid #fff;border-right:1.8px solid #6a6a6a;border-bottom:1.8px solid #6a6a6a;"></div>
<div style="position:absolute;left:498.4px;top:598px;width:52.8px;height:15.5px;box-sizing:border-box;background:#f0f0f0;border-top:1px solid #fff;border-left:1px solid #fff;border-right:1.8px solid #6a6a6a;border-bottom:1.8px solid #6a6a6a;"></div>
<span class="t" style="left:512.0px;top:600.18px;font-size:10.5px;line-height:10.5px;color:#151515;transform:scaleX(0.963);">Reset</span>
<div style="position:absolute;left:566.6px;top:598px;width:54.2px;height:15.5px;box-sizing:border-box;background:#f0f0f0;border-top:1px solid #fff;border-left:1px solid #fff;border-right:1.8px solid #6a6a6a;border-bottom:1.8px solid #6a6a6a;"></div>
<span class="t" style="left:579.8px;top:600.18px;font-size:10.5px;line-height:10.5px;color:#151515;transform:scaleX(0.897);">Définir</span>
<span class="t" style="left:642.8px;top:569.02px;font-size:10.5px;line-height:10.5px;color:#151515;transform:scaleX(0.927);">PasseBas</span>
<span class="t" style="left:758.9px;top:569.02px;font-size:10.5px;line-height:10.5px;color:#151515;transform:scaleX(0.942);">0</span>
<div style="position:absolute;left:642.4px;top:583px;width:122.3px;height:14.5px;background:#fff;border-top:1px solid #8a8a8a;box-sizing:border-box;"></div>
<div style="position:absolute;left:642.4px;top:583px;width:15px;height:14.5px;box-sizing:border-box;background:#f0f0f0;border-top:1px solid #fff;border-left:1px solid #fff;border-right:1.8px solid #6a6a6a;border-bottom:1.8px solid #6a6a6a;"></div>
<svg width="800" height="659"><path d="M651.0 586.55 L647.8 589.75 L651.0 592.95 Z" fill="#000"/></svg>
<div style="position:absolute;left:749.6999999999999px;top:583px;width:15px;height:14.5px;box-sizing:border-box;background:#f0f0f0;border-top:1px solid #fff;border-left:1px solid #fff;border-right:1.8px solid #6a6a6a;border-bottom:1.8px solid #6a6a6a;"></div>
<svg width="800" height="659"><path d="M755.0999999999999 586.55 L758.3 589.75 L755.0999999999999 592.95 Z" fill="#000"/></svg>
<div style="position:absolute;left:742px;top:583px;width:7px;height:14.5px;box-sizing:border-box;background:#f0f0f0;border-top:1px solid #fff;border-left:1px solid #fff;border-right:1.8px solid #6a6a6a;border-bottom:1.8px solid #6a6a6a;"></div>
<div style="position:absolute;left:642.4px;top:598px;width:52.8px;height:15.5px;box-sizing:border-box;background:#f0f0f0;border-top:1px solid #fff;border-left:1px solid #fff;border-right:1.8px solid #6a6a6a;border-bottom:1.8px solid #6a6a6a;"></div>
<span class="t" style="left:656.0px;top:600.18px;font-size:10.5px;line-height:10.5px;color:#151515;transform:scaleX(0.963);">Reset</span>
<div style="position:absolute;left:710.6px;top:598px;width:54.2px;height:15.5px;box-sizing:border-box;background:#f0f0f0;border-top:1px solid #fff;border-left:1px solid #fff;border-right:1.8px solid #6a6a6a;border-bottom:1.8px solid #6a6a6a;"></div>
<span class="t" style="left:723.8px;top:600.18px;font-size:10.5px;line-height:10.5px;color:#151515;transform:scaleX(0.897);">Définir</span>
</div></body></html>
